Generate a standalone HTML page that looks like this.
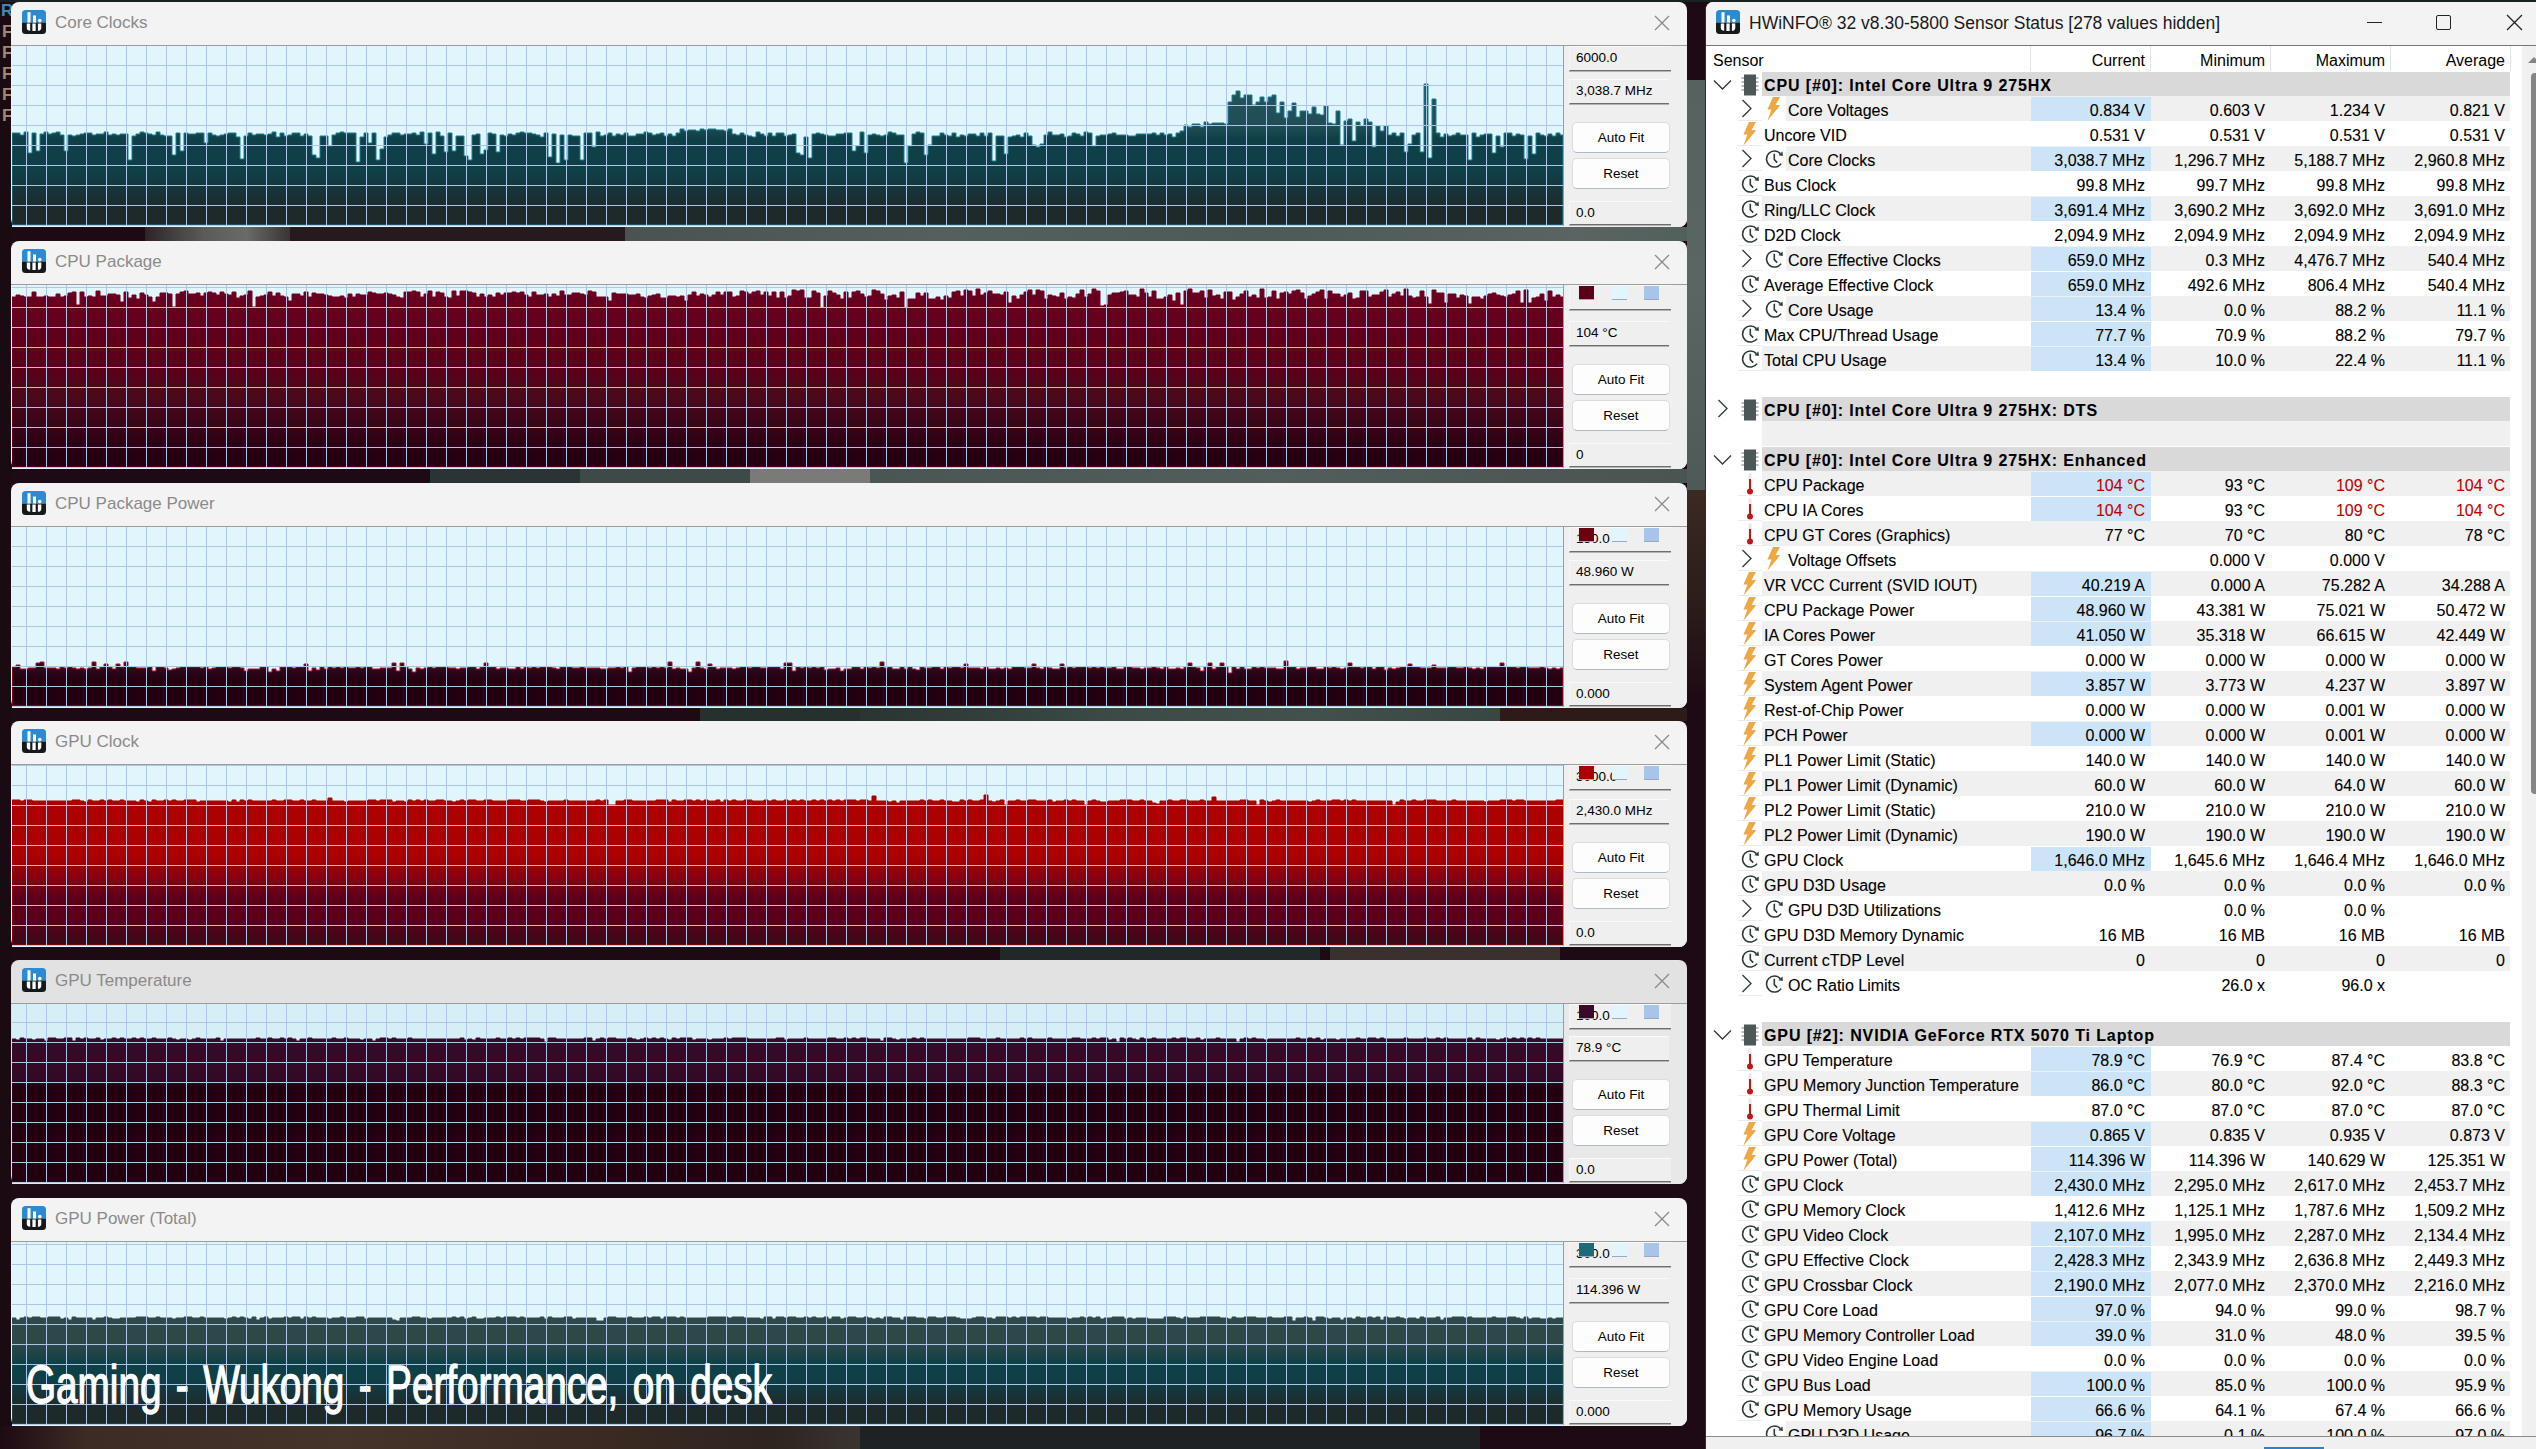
<!DOCTYPE html>
<html><head><meta charset="utf-8"><style>
*{margin:0;padding:0;box-sizing:border-box}
html,body{width:2536px;height:1449px;overflow:hidden}
body{position:relative;background:#1e0a14;font-family:"Liberation Sans", sans-serif;}
.wp{position:absolute}
.gw{position:absolute;left:11px;width:1676px;background:#f3f3f3;border-radius:8px;overflow:hidden}
.gt{position:absolute;left:44px;top:10px;font-size:17px;line-height:22px;color:#8a8a8a;white-space:nowrap}
.gx{position:absolute;left:1642px;top:12px}
.gline{position:absolute;left:0;right:0;height:1px;background:#9c9c9c}
.gpanel{position:absolute;left:1553px;right:0;background:#efefef}
.gs{position:absolute}
.vb{position:absolute;left:1569px;width:102px;background:#efefef;border-top:1px solid #fafafa;border-left:1px solid #f6f6f6;border-bottom:1px solid #6e6e6e;box-shadow:0 1px 0 #b4b4b4;font-size:13.5px;line-height:22px;padding-left:6px;color:#000;white-space:nowrap;overflow:hidden}
.vbt{position:absolute;left:6px;top:0}
.sw{position:absolute;top:-1px;width:15px;height:15px;border-bottom:1px solid #9aa8c0}
.btn{position:absolute;left:1572px;width:98px;height:31px;background:#fdfdfd;border:1px solid #dcdcdc;border-bottom-color:#b0b8c8;border-radius:5px;font-size:13.5px;line-height:29px;text-align:center;color:#000}
.hw{position:absolute;left:1705px;top:2px;width:831px;height:1447px;background:#fff;border-left:1px solid #2a3030;border-top-left-radius:8px;overflow:hidden}
.rg{position:absolute;left:1762px;width:748px;height:24px;background:#d9d9d9;margin-top:1px}
.rs{position:absolute;width:auto;right:26px;height:25px;background:#f0f0f0;margin-top:0}
.rb{position:absolute;left:2031px;width:120px;height:24px;background:#cce4f7;margin-top:1px}
.sep{position:absolute;left:1738px;width:24px;height:1px;background:#ececec}
.ic{position:absolute}
.tx{position:absolute;font-size:16px;line-height:26px;margin-top:2px;-webkit-text-stroke:0.1px #000;color:#000;white-space:nowrap}
.tx.b{font-weight:bold;letter-spacing:0.88px}
.tv{position:absolute;font-size:16px;line-height:26px;margin-top:2px;-webkit-text-stroke:0.1px currentColor;white-space:nowrap;text-align:right}
.hdr{position:absolute;top:48px;font-size:16px;line-height:26px;color:#000}
.cd{position:absolute;top:46px;width:1px;height:25px;background:#e5e5e5}
.ov{position:absolute;left:26px;top:1353px;font-size:53px;line-height:64px;color:#fff;-webkit-text-stroke:1.3px #fff;word-spacing:5px;white-space:nowrap;transform-origin:0 0;transform:scaleX(0.73)}
</style></head>
<body>

<div class="wp" style="left:0;top:0;width:11px;height:1449px;background:#1a0b12"></div><div class="wp" style="left:0;top:0;width:2536px;height:2px;background:#182222"></div><div class="wp" style="left:1px;top:0px;font:bold 17px/21px 'Liberation Sans',sans-serif;color:#3a8ab8">R</div><div class="wp" style="left:2px;top:21px;font:bold 17px/21px 'Liberation Sans',sans-serif;color:#a08870">F<br>F<br>F<br>F<br>F</div>
<div class="wp" style="left:145px;top:227px;width:145px;height:14px;background:linear-gradient(90deg,#2e2428,#5a5a58 40%,#6a6a68 70%,#3a3434)"></div>
<div class="wp" style="left:290px;top:227px;width:335px;height:14px;background:#261a1e"></div>
<div class="wp" style="left:625px;top:227px;width:1062px;height:14px;background:linear-gradient(90deg,#4a5252,#55605e 30%,#4e5a58 60%,#5a6462 90%,#52605c)"></div>
<div class="wp" style="left:430px;top:469px;width:150px;height:14px;background:#2a3434"></div>
<div class="wp" style="left:580px;top:469px;width:170px;height:14px;background:#3e4a48"></div>
<div class="wp" style="left:750px;top:469px;width:120px;height:14px;background:#7a7a78"></div>
<div class="wp" style="left:870px;top:469px;width:817px;height:14px;background:linear-gradient(90deg,#4a5654,#525e5c 50%,#4a5452)"></div>
<div class="wp" style="left:700px;top:708px;width:160px;height:13px;background:#26302e"></div>
<div class="wp" style="left:860px;top:708px;width:640px;height:13px;background:linear-gradient(90deg,#2a3432,#3e4a48 40%,#44504e 70%,#3a4644)"></div>
<div class="wp" style="left:1500px;top:708px;width:187px;height:13px;background:#2e1a16"></div>
<div class="wp" style="left:1000px;top:947px;width:320px;height:13px;background:#22282a"></div>
<div class="wp" style="left:1330px;top:947px;width:230px;height:13px;background:#3a3030"></div>
<div class="wp" style="left:1687px;top:80px;width:18px;height:410px;background:linear-gradient(#56625f,#5a6664 50%,#4e5a58)"></div>
<div class="wp" style="left:1687px;top:490px;width:18px;height:210px;background:linear-gradient(#3a2a22,#2a1a1a 60%,#1e0a14)"></div>
<div class="wp" style="left:0px;top:1426px;width:860px;height:23px;background:linear-gradient(90deg,#1e0a14,#3c2c24 10%,#44342a 40%,#3a2a22 70%,#2e2420 90%,#3a3430)"></div>
<div class="wp" style="left:860px;top:1426px;width:620px;height:23px;background:#1e2224"></div>

<div class="gw" style="top:2px;height:225px;">
<svg style="position:absolute;left:11px;top:8px" width="24" height="24" viewBox="0 0 24 24"><defs><clipPath id="rc"><rect x="0" y="0" width="24" height="24" rx="3.5"/></clipPath></defs><g clip-path="url(#rc)"><rect x="0" y="0" width="24" height="12.5" fill="#2b8ad2"/><rect x="0" y="12.5" width="24" height="11.5" fill="#141a1c"/><rect x="5.5" y="2.2" width="3" height="10.3" fill="#fff"/><rect x="11" y="5.5" width="3" height="7" fill="#fff"/><circle cx="17.8" cy="10.6" r="1.8" fill="#fff"/><path d="M4.8 13.6h3.4v7.2q-3.4 0-3.4-3z M10.4 13.6h3.3v7.4h-3.3z M15.9 13.6h3.4v3.8q0 3.4-3.4 3.4z" fill="#fff"/></g></svg>
<div class="gt">Core Clocks</div>
<svg class="gx" width="18" height="18" viewBox="0 0 18 18"><path d="M2 2L16 16M16 2L2 16" stroke="#8a8a8a" stroke-width="1.3" fill="none"/></svg>
<div class="gline" style="top:43px"></div>
<div class="gpanel" style="top:44px;height:181px;"></div>
</div>
<svg class="gs" style="left:12px;top:45px" width="1552" height="182" viewBox="12 45 1552 182"><defs><linearGradient id="g0" gradientUnits="userSpaceOnUse" x1="0" y1="45" x2="0" y2="225"><stop offset="0" stop-color="#2a5a60"/><stop offset="0.45" stop-color="#1f4e54"/><stop offset="0.52" stop-color="#0f4048"/><stop offset="0.7" stop-color="#0f4048"/><stop offset="0.9" stop-color="#1e2a2a"/><stop offset="1" stop-color="#1e2a2a"/></linearGradient></defs><rect x="12" y="45" width="1552" height="182" fill="#e0f6fc"/><path d="M12 225V133H16V133H20V135H24V132H28V153H32V133H36V151H40V134H44V132H48V134H52V133H56V132H60V135H64V151H68V135H72V136H76V135H80V134H84V133H88V133H92V135H96V134H100V134H104V132H108V135H112V134H116V135H120V134H124V134H128V160H132V136H136V134H140V132H144V133H148V134H152V135H156V132H160V135H164V136H168V136H172V155H176V133H180V151H184V133H188V134H192V134H196V133H200V133H204V143H208V133H212V135H216V136H220V135H224V134H228V133H232V133H236V137H240V159H244V136H248V133H252V135H256V134H260V134H264V135H268V134H272V132H276V137H280V133H284V136H288V135H292V133H296V133H300V136H304V134H308V136H312V155H316V158H320V136H324V136H328V146H332V135H336V133H340V132H344V133H348V133H352V133H356V162H360V137H364V133H368V143H372V133H376V160H380V149H384V137H388V135H392V133H396V133H400V135H404V134H408V134H412V133H416V135H420V132H424V144H428V133H432V154H436V132H440V136H444V152H448V133H452V151H456V136H460V136H464V156H468V160H472V135H476V134H480V154H484V150H488V133H492V134H496V152H500V135H504V136H508V134H512V135H516V133H520V132H524V133H528V133H532V134H536V135H540V137H544V133H548V157H552V134H556V163H560V135H564V160H568V135H572V136H576V136H580V160H584V133H588V133H592V147H596V132H600V136H604V135H608V133H612V136H616V134H620V135H624V133H628V136H632V136H636V134H640V134H644V132H648V133H652V135H656V134H660V133H664V136H668V134H672V136H676V133H680V129H684V131H688V130H692V130H696V131H700V129H704V130H708V129H712V129H716V130H720V130H724V131H728V129H732V134H736V135H740V133H744V135H748V136H752V137H756V132H760V134H764V136H768V133H772V136H776V133H780V133H784V136H788V135H792V134H796V153H800V155H804V137H808V158H812V134H816V133H820V134H824V135H828V136H832V136H836V134H840V134H844V133H848V133H852V151H856V146H860V132H864V153H868V135H872V134H876V135H880V136H884V135H888V132H892V133H896V135H900V135H904V163H908V146H912V134H916V132H920V133H924V155H928V145H932V136H936V136H940V133H944V135H948V136H952V133H956V137H960V135H964V136H968V134H972V134H976V136H980V133H984V136H988V133H992V161H996V136H1000V136H1004V154H1008V137H1012V136H1016V135H1020V137H1024V133H1028V136H1032V145H1036V147H1040V144H1044V135H1048V132H1052V135H1056V135H1060V134H1064V137H1068V136H1072V133H1076V134H1080V136H1084V132H1088V133H1092V146H1096V136H1100V135H1104V135H1108V134H1112V133H1116V135H1120V135H1124V135H1128V136H1132V136H1136V134H1140V134H1144V134H1148V134H1152V133H1156V135H1160V133H1164V135H1168V134H1172V137H1176V133H1180V131H1184V125H1188V127H1192V124H1196V124H1200V127H1204V122H1208V124H1212V123H1216V123H1220V123H1224V124H1228V102H1232V95H1236V91H1240V98H1244V95H1248V95H1252V105H1256V102H1260V97H1264V102H1268V97H1272V95H1276V113H1280V102H1284V118H1288V111H1292V103H1296V117H1300V111H1304V111H1308V114H1312V107H1316V114H1320V115H1324V106H1328V123H1332V124H1336V111H1340V145H1344V121H1348V119H1352V141H1356V122H1360V126H1364V119H1368V122H1372V147H1376V126H1380V131H1384V126H1388V135H1392V133H1396V136H1400V133H1404V152H1408V144H1412V135H1416V133H1420V152H1424V84H1428V158H1432V99H1436V133H1440V137H1444V134H1448V136H1452V135H1456V133H1460V135H1464V135H1468V160H1472V133H1476V137H1480V135H1484V134H1488V134H1492V153H1496V136H1500V147H1504V133H1508V133H1512V136H1516V134H1520V135H1524V159H1528V136H1532V154H1536V133H1540V135H1544V136H1548V134H1552V136H1556V133H1560V135H1563V225Z" fill="url(#g0)" stroke="#1a7f95" stroke-width="1"/><path d="M26.5 45V225M46.5 45V225M66.5 45V225M86.5 45V225M106.5 45V225M126.5 45V225M146.5 45V225M166.5 45V225M186.5 45V225M206.5 45V225M226.5 45V225M246.5 45V225M266.5 45V225M286.5 45V225M306.5 45V225M326.5 45V225M346.5 45V225M366.5 45V225M386.5 45V225M406.5 45V225M426.5 45V225M446.5 45V225M466.5 45V225M486.5 45V225M506.5 45V225M526.5 45V225M546.5 45V225M566.5 45V225M586.5 45V225M606.5 45V225M626.5 45V225M646.5 45V225M666.5 45V225M686.5 45V225M706.5 45V225M726.5 45V225M746.5 45V225M766.5 45V225M786.5 45V225M806.5 45V225M826.5 45V225M846.5 45V225M866.5 45V225M886.5 45V225M906.5 45V225M926.5 45V225M946.5 45V225M966.5 45V225M986.5 45V225M1006.5 45V225M1026.5 45V225M1046.5 45V225M1066.5 45V225M1086.5 45V225M1106.5 45V225M1126.5 45V225M1146.5 45V225M1166.5 45V225M1186.5 45V225M1206.5 45V225M1226.5 45V225M1246.5 45V225M1266.5 45V225M1286.5 45V225M1306.5 45V225M1326.5 45V225M1346.5 45V225M1366.5 45V225M1386.5 45V225M1406.5 45V225M1426.5 45V225M1446.5 45V225M1466.5 45V225M1486.5 45V225M1506.5 45V225M1526.5 45V225M1546.5 45V225M12 205.5H1563M12 185.5H1563M12 165.5H1563M12 145.5H1563M12 125.5H1563M12 105.5H1563M12 85.5H1563M12 65.5H1563" stroke="#adc6e8" stroke-width="1" fill="none"/><path d="M12 45.5H1564" stroke="#9c9c9c" stroke-width="1"/><path d="M12 225.5H1564" stroke="#b4c8e8" stroke-width="1"/><path d="M1563.5 45V226" stroke="#9c9c9c" stroke-width="1"/></svg>
<div class="vb" style="top:46px;height:25px">6000.0</div>
<div class="vb" style="top:79px;height:25px;width:100px">3,038.7 MHz</div>
<div class="btn" style="top:122px">Auto Fit</div>
<div class="btn" style="top:158px">Reset</div>
<div class="vb" style="top:201px;height:24px">0.0</div>
<div class="gw" style="top:241px;height:228px;">
<svg style="position:absolute;left:11px;top:8px" width="24" height="24" viewBox="0 0 24 24"><defs><clipPath id="rc"><rect x="0" y="0" width="24" height="24" rx="3.5"/></clipPath></defs><g clip-path="url(#rc)"><rect x="0" y="0" width="24" height="12.5" fill="#2b8ad2"/><rect x="0" y="12.5" width="24" height="11.5" fill="#141a1c"/><rect x="5.5" y="2.2" width="3" height="10.3" fill="#fff"/><rect x="11" y="5.5" width="3" height="7" fill="#fff"/><circle cx="17.8" cy="10.6" r="1.8" fill="#fff"/><path d="M4.8 13.6h3.4v7.2q-3.4 0-3.4-3z M10.4 13.6h3.3v7.4h-3.3z M15.9 13.6h3.4v3.8q0 3.4-3.4 3.4z" fill="#fff"/></g></svg>
<div class="gt">CPU Package</div>
<svg class="gx" width="18" height="18" viewBox="0 0 18 18"><path d="M2 2L16 16M16 2L2 16" stroke="#8a8a8a" stroke-width="1.3" fill="none"/></svg>
<div class="gline" style="top:43px"></div>
<div class="gpanel" style="top:44px;height:184px;"></div>
</div>
<svg class="gs" style="left:12px;top:284px" width="1552" height="185" viewBox="12 284 1552 185"><defs><linearGradient id="g1" gradientUnits="userSpaceOnUse" x1="0" y1="284" x2="0" y2="467"><stop offset="0" stop-color="#6a0020"/><stop offset="0.45" stop-color="#5c0019"/><stop offset="0.62" stop-color="#4a0a1c"/><stop offset="0.9" stop-color="#2a0012"/><stop offset="1" stop-color="#230010"/></linearGradient></defs><rect x="12" y="284" width="1552" height="185" fill="#e0f6fc"/><path d="M12 467V297H16V295H20V296H24V297H28V297H32V292H36V297H40V297H44V296H48V297H52V297H56V294H60V297H64V296H68V293H72V292H76V305H80V292H84V297H88V296H92V297H96V291H100V296H104V296H108V294H112V294H116V295H120V302H124V292H128V298H132V295H136V299H140V293H144V295H148V297H152V302H156V297H160V293H164V293H168V294H172V307H176V294H180V292H184V291H188V294H192V294H196V293H200V296H204V293H208V292H212V293H216V295H220V292H224V294H228V295H232V292H236V298H240V296H244V295H248V291H252V307H256V297H260V296H264V295H268V292H272V296H276V293H280V296H284V297H288V301H292V294H296V294H300V296H304V292H308V297H312V293H316V294H320V294H324V295H328V296H332V297H336V297H340V296H344V298H348V294H352V297H356V294H360V295H364V295H368V292H372V293H376V294H380V294H384V293H388V294H392V295H396V297H400V298H404V292H408V292H412V291H416V292H420V297H424V294H428V291H432V297H436V292H440V293H444V297H448V298H452V291H456V296H460V291H464V291H468V292H472V293H476V297H480V294H484V297H488V295H492V297H496V293H500V295H504V293H508V293H512V292H516V293H520V292H524V295H528V297H532V292H536V295H540V295H544V294H548V297H552V294H556V296H560V291H564V295H568V295H572V293H576V293H580V294H584V295H588V291H592V292H596V297H600V297H604V297H608V301H612V293H616V294H620V294H624V294H628V295H632V295H636V294H640V297H644V298H648V296H652V295H656V294H660V298H664V298H668V296H672V296H676V297H680V296H684V301H688V295H692V292H696V296H700V294H704V295H708V297H712V295H716V292H720V295H724V292H728V292H732V297H736V296H740V291H744V292H748V294H752V292H756V291H760V295H764V292H768V296H772V292H776V298H780V292H784V298H788V296H792V290H796V291H800V290H804V298H808V298H812V291H816V293H820V308H824V296H828V291H832V293H836V295H840V299H844V292H848V298H852V292H856V291H860V294H864V297H868V296H872V290H876V291H880V294H884V300H888V296H892V295H896V298H900V292H904V308H908V299H912V299H916V293H920V296H924V293H928V299H932V299H936V297H940V300H944V296H948V298H952V292H956V291H960V296H964V290H968V291H972V296H976V289H980V295H984V293H988V291H992V294H996V294H1000V295H1004V292H1008V303H1012V296H1016V299H1020V295H1024V292H1028V290H1032V295H1036V290H1040V291H1044V299H1048V295H1052V296H1056V297H1060V293H1064V299H1068V297H1072V298H1076V294H1080V290H1084V297H1088V294H1092V289H1096V291H1100V306H1104V305H1108V295H1112V293H1116V293H1120V292H1124V291H1128V295H1132V295H1136V297H1140V289H1144V293H1148V297H1152V291H1156V299H1160V299H1164V297H1168V295H1172V301H1176V293H1180V305H1184V291H1188V289H1192V293H1196V293H1200V291H1204V298H1208V290H1212V296H1216V295H1220V299H1224V292H1228V292H1232V300H1236V297H1240V294H1244V291H1248V297H1252V295H1256V298H1260V289H1264V298H1268V297H1272V291H1276V299H1280V293H1284V292H1288V294H1292V291H1296V290H1300V293H1304V299H1308V296H1312V294H1316V292H1320V290H1324V299H1328V291H1332V294H1336V294H1340V297H1344V295H1348V293H1352V299H1356V298H1360V291H1364V291H1368V297H1372V295H1376V295H1380V292H1384V290H1388V297H1392V294H1396V292H1400V296H1404V289H1408V296H1412V298H1416V297H1420V291H1424V297H1428V304H1432V290H1436V293H1440V293H1444V303H1448V294H1452V294H1456V298H1460V295H1464V296H1468V304H1472V297H1476V297H1480V299H1484V296H1488V294H1492V293H1496V295H1500V296H1504V297H1508V295H1512V294H1516V291H1520V303H1524V290H1528V303H1532V298H1536V297H1540V294H1544V301H1548V291H1552V297H1556V295H1560V297H1563V467Z" fill="url(#g1)" stroke="#7a0020" stroke-width="1"/><path d="M26.5 284V467M46.5 284V467M66.5 284V467M86.5 284V467M106.5 284V467M126.5 284V467M146.5 284V467M166.5 284V467M186.5 284V467M206.5 284V467M226.5 284V467M246.5 284V467M266.5 284V467M286.5 284V467M306.5 284V467M326.5 284V467M346.5 284V467M366.5 284V467M386.5 284V467M406.5 284V467M426.5 284V467M446.5 284V467M466.5 284V467M486.5 284V467M506.5 284V467M526.5 284V467M546.5 284V467M566.5 284V467M586.5 284V467M606.5 284V467M626.5 284V467M646.5 284V467M666.5 284V467M686.5 284V467M706.5 284V467M726.5 284V467M746.5 284V467M766.5 284V467M786.5 284V467M806.5 284V467M826.5 284V467M846.5 284V467M866.5 284V467M886.5 284V467M906.5 284V467M926.5 284V467M946.5 284V467M966.5 284V467M986.5 284V467M1006.5 284V467M1026.5 284V467M1046.5 284V467M1066.5 284V467M1086.5 284V467M1106.5 284V467M1126.5 284V467M1146.5 284V467M1166.5 284V467M1186.5 284V467M1206.5 284V467M1226.5 284V467M1246.5 284V467M1266.5 284V467M1286.5 284V467M1306.5 284V467M1326.5 284V467M1346.5 284V467M1366.5 284V467M1386.5 284V467M1406.5 284V467M1426.5 284V467M1446.5 284V467M1466.5 284V467M1486.5 284V467M1506.5 284V467M1526.5 284V467M1546.5 284V467M12 447.5H1563M12 427.5H1563M12 407.5H1563M12 387.5H1563M12 367.5H1563M12 347.5H1563M12 327.5H1563M12 307.5H1563M12 287.5H1563" stroke="#adc6e8" stroke-width="1" fill="none"/><path d="M12 284.5H1564" stroke="#9c9c9c" stroke-width="1"/><path d="M12 467.5H1564" stroke="#b4c8e8" stroke-width="1"/><path d="M1563.5 284V468" stroke="#9c9c9c" stroke-width="1"/></svg>
<div class="vb" style="top:285px;height:25px"><span class="vbt"></span><i class="sw" style="left:9px;background:#5c0019"></i><i class="sw" style="left:42px;background:#e0f6fc"></i><i class="sw" style="left:74px;background:#a8c4e8"></i></div>
<div class="vb" style="top:321px;height:25px;width:100px">104 °C</div>
<div class="btn" style="top:364px">Auto Fit</div>
<div class="btn" style="top:400px">Reset</div>
<div class="vb" style="top:443px;height:24px">0</div>
<div class="gw" style="top:483px;height:225px;">
<svg style="position:absolute;left:11px;top:8px" width="24" height="24" viewBox="0 0 24 24"><defs><clipPath id="rc"><rect x="0" y="0" width="24" height="24" rx="3.5"/></clipPath></defs><g clip-path="url(#rc)"><rect x="0" y="0" width="24" height="12.5" fill="#2b8ad2"/><rect x="0" y="12.5" width="24" height="11.5" fill="#141a1c"/><rect x="5.5" y="2.2" width="3" height="10.3" fill="#fff"/><rect x="11" y="5.5" width="3" height="7" fill="#fff"/><circle cx="17.8" cy="10.6" r="1.8" fill="#fff"/><path d="M4.8 13.6h3.4v7.2q-3.4 0-3.4-3z M10.4 13.6h3.3v7.4h-3.3z M15.9 13.6h3.4v3.8q0 3.4-3.4 3.4z" fill="#fff"/></g></svg>
<div class="gt">CPU Package Power</div>
<svg class="gx" width="18" height="18" viewBox="0 0 18 18"><path d="M2 2L16 16M16 2L2 16" stroke="#8a8a8a" stroke-width="1.3" fill="none"/></svg>
<div class="gline" style="top:43px"></div>
<div class="gpanel" style="top:44px;height:181px;"></div>
</div>
<svg class="gs" style="left:12px;top:526px" width="1552" height="182" viewBox="12 526 1552 182"><defs><linearGradient id="g2" gradientUnits="userSpaceOnUse" x1="0" y1="526" x2="0" y2="706"><stop offset="0" stop-color="#5a0a20"/><stop offset="0.78" stop-color="#300a1a"/><stop offset="0.86" stop-color="#230010"/><stop offset="1" stop-color="#220010"/></linearGradient></defs><rect x="12" y="526" width="1552" height="182" fill="#e0f6fc"/><path d="M12 706V667H16V665H20V669H24V669H28V668H32V668H36V663H40V662H44V668H48V668H52V668H56V669H60V667H64V668H68V667H72V668H76V669H80V668H84V669H88V668H92V662H96V669H100V667H104V664H108V667H112V669H116V664H120V667H124V662H128V667H132V667H136V668H140V668H144V668H148V667H152V671H156V667H160V667H164V668H168V670H172V669H176V668H180V667H184V667H188V667H192V667H196V667H200V668H204V667H208V669H212V668H216V667H220V667H224V667H228V668H232V667H236V667H240V668H244V671H248V669H252V669H256V669H260V667H264V667H268V672H272V669H276V671H280V667H284V667H288V667H292V668H296V667H300V667H304V664H308V671H312V668H316V670H320V667H324V669H328V667H332V668H336V667H340V668H344V667H348V668H352V668H356V667H360V668H364V667H368V667H372V669H376V669H380V668H384V668H388V668H392V663H396V671H400V663H404V667H408V669H412V672H416V668H420V669H424V668H428V667H432V668H436V667H440V667H444V667H448V668H452V668H456V669H460V668H464V668H468V667H472V667H476V669H480V667H484V663H488V667H492V667H496V669H500V668H504V668H508V669H512V669H516V667H520V669H524V667H528V668H532V667H536V668H540V667H544V667H548V667H552V668H556V669H560V667H564V667H568V667H572V668H576V668H580V667H584V668H588V668H592V668H596V668H600V669H604V669H608V668H612V668H616V667H620V668H624V667H628V672H632V668H636V667H640V667H644V667H648V668H652V667H656V668H660V667H664V668H668V662H672V669H676V668H680V669H684V669H688V672H692V668H696V662H700V668H704V669H708V664H712V667H716V669H720V668H724V668H728V668H732V669H736V668H740V667H744V667H748V668H752V667H756V667H760V668H764V668H768V667H772V667H776V667H780V669H784V663H788V663H792V671H796V667H800V668H804V667H808V668H812V667H816V668H820V667H824V670H828V669H832V669H836V668H840V671H844V669H848V669H852V667H856V667H860V669H864V667H868V668H872V667H876V668H880V662H884V668H888V667H892V669H896V669H900V667H904V669H908V667H912V669H916V670H920V667H924V668H928V668H932V667H936V667H940V669H944V667H948V668H952V667H956V667H960V668H964V664H968V668H972V668H976V668H980V669H984V667H988V669H992V669H996V668H1000V669H1004V668H1008V669H1012V667H1016V667H1020V667H1024V668H1028V668H1032V664H1036V668H1040V669H1044V667H1048V668H1052V669H1056V669H1060V664H1064V668H1068V667H1072V668H1076V667H1080V667H1084V667H1088V668H1092V667H1096V668H1100V667H1104V668H1108V668H1112V667H1116V669H1120V669H1124V667H1128V667H1132V668H1136V668H1140V669H1144V668H1148V668H1152V667H1156V668H1160V669H1164V667H1168V669H1172V669H1176V668H1180V669H1184V667H1188V663H1192V667H1196V668H1200V671H1204V667H1208V663H1212V669H1216V667H1220V663H1224V667H1228V673H1232V667H1236V669H1240V667H1244V669H1248V669H1252V667H1256V668H1260V667H1264V668H1268V668H1272V668H1276V669H1280V669H1284V661H1288V667H1292V667H1296V669H1300V668H1304V668H1308V667H1312V667H1316V669H1320V669H1324V667H1328V668H1332V667H1336V668H1340V669H1344V668H1348V663H1352V667H1356V667H1360V668H1364V667H1368V667H1372V669H1376V667H1380V667H1384V670H1388V668H1392V669H1396V668H1400V667H1404V667H1408V664H1412V667H1416V667H1420V668H1424V668H1428V668H1432V665H1436V668H1440V668H1444V668H1448V667H1452V667H1456V668H1460V668H1464V667H1468V668H1472V669H1476V668H1480V669H1484V667H1488V667H1492V667H1496V667H1500V663H1504V667H1508V667H1512V667H1516V668H1520V667H1524V667H1528V668H1532V668H1536V668H1540V667H1544V668H1548V669H1552V668H1556V669H1560V668H1563V706Z" fill="url(#g2)" stroke="#b01030" stroke-width="1"/><path d="M26.5 526V706M46.5 526V706M66.5 526V706M86.5 526V706M106.5 526V706M126.5 526V706M146.5 526V706M166.5 526V706M186.5 526V706M206.5 526V706M226.5 526V706M246.5 526V706M266.5 526V706M286.5 526V706M306.5 526V706M326.5 526V706M346.5 526V706M366.5 526V706M386.5 526V706M406.5 526V706M426.5 526V706M446.5 526V706M466.5 526V706M486.5 526V706M506.5 526V706M526.5 526V706M546.5 526V706M566.5 526V706M586.5 526V706M606.5 526V706M626.5 526V706M646.5 526V706M666.5 526V706M686.5 526V706M706.5 526V706M726.5 526V706M746.5 526V706M766.5 526V706M786.5 526V706M806.5 526V706M826.5 526V706M846.5 526V706M866.5 526V706M886.5 526V706M906.5 526V706M926.5 526V706M946.5 526V706M966.5 526V706M986.5 526V706M1006.5 526V706M1026.5 526V706M1046.5 526V706M1066.5 526V706M1086.5 526V706M1106.5 526V706M1126.5 526V706M1146.5 526V706M1166.5 526V706M1186.5 526V706M1206.5 526V706M1226.5 526V706M1246.5 526V706M1266.5 526V706M1286.5 526V706M1306.5 526V706M1326.5 526V706M1346.5 526V706M1366.5 526V706M1386.5 526V706M1406.5 526V706M1426.5 526V706M1446.5 526V706M1466.5 526V706M1486.5 526V706M1506.5 526V706M1526.5 526V706M1546.5 526V706M12 686.5H1563M12 666.5H1563M12 646.5H1563M12 626.5H1563M12 606.5H1563M12 586.5H1563M12 566.5H1563M12 546.5H1563" stroke="#adc6e8" stroke-width="1" fill="none"/><path d="M12 526.5H1564" stroke="#9c9c9c" stroke-width="1"/><path d="M12 706.5H1564" stroke="#b4c8e8" stroke-width="1"/><path d="M1563.5 526V707" stroke="#9c9c9c" stroke-width="1"/></svg>
<div class="vb" style="top:527px;height:25px"><span class="vbt">150.0</span><i class="sw" style="left:9px;background:#6a0010"></i><i class="sw" style="left:42px;background:#e0f6fc"></i><i class="sw" style="left:74px;background:#a8c4e8"></i></div>
<div class="vb" style="top:560px;height:25px;width:100px">48.960 W</div>
<div class="btn" style="top:603px">Auto Fit</div>
<div class="btn" style="top:639px">Reset</div>
<div class="vb" style="top:682px;height:24px">0.000</div>
<div class="gw" style="top:721px;height:226px;">
<svg style="position:absolute;left:11px;top:8px" width="24" height="24" viewBox="0 0 24 24"><defs><clipPath id="rc"><rect x="0" y="0" width="24" height="24" rx="3.5"/></clipPath></defs><g clip-path="url(#rc)"><rect x="0" y="0" width="24" height="12.5" fill="#2b8ad2"/><rect x="0" y="12.5" width="24" height="11.5" fill="#141a1c"/><rect x="5.5" y="2.2" width="3" height="10.3" fill="#fff"/><rect x="11" y="5.5" width="3" height="7" fill="#fff"/><circle cx="17.8" cy="10.6" r="1.8" fill="#fff"/><path d="M4.8 13.6h3.4v7.2q-3.4 0-3.4-3z M10.4 13.6h3.3v7.4h-3.3z M15.9 13.6h3.4v3.8q0 3.4-3.4 3.4z" fill="#fff"/></g></svg>
<div class="gt">GPU Clock</div>
<svg class="gx" width="18" height="18" viewBox="0 0 18 18"><path d="M2 2L16 16M16 2L2 16" stroke="#8a8a8a" stroke-width="1.3" fill="none"/></svg>
<div class="gline" style="top:43px"></div>
<div class="gpanel" style="top:44px;height:182px;"></div>
</div>
<svg class="gs" style="left:12px;top:764px" width="1552" height="183" viewBox="12 764 1552 183"><defs><linearGradient id="g3" gradientUnits="userSpaceOnUse" x1="0" y1="764" x2="0" y2="945"><stop offset="0" stop-color="#ad0000"/><stop offset="0.5" stop-color="#ad0000"/><stop offset="0.62" stop-color="#8c0010"/><stop offset="0.74" stop-color="#5c0019"/><stop offset="0.86" stop-color="#5c0019"/><stop offset="1" stop-color="#3a0a18"/></linearGradient></defs><rect x="12" y="764" width="1552" height="183" fill="#e0f6fc"/><path d="M12 945V800H16V800H20V801H24V800H28V800H32V801H36V801H40V801H44V801H48V801H52V801H56V801H60V801H64V801H68V801H72V800H76V800H80V801H84V802H88V800H92V801H96V801H100V800H104V801H108V800H112V801H116V801H120V800H124V801H128V801H132V801H136V802H140V800H144V801H148V802H152V800H156V801H160V801H164V800H168V801H172V800H176V801H180V801H184V800H188V800H192V800H196V802H200V801H204V801H208V801H212V801H216V801H220V801H224V801H228V802H232V800H236V802H240V800H244V801H248V800H252V801H256V801H260V801H264V801H268V801H272V800H276V801H280V801H284V800H288V800H292V801H296V801H300V800H304V801H308V801H312V800H316V801H320V801H324V801H328V798H332V801H336V801H340V801H344V802H348V801H352V801H356V801H360V801H364V801H368V800H372V800H376V801H380V800H384V800H388V800H392V802H396V801H400V801H404V802H408V800H412V801H416V800H420V801H424V800H428V801H432V801H436V800H440V800H444V801H448V801H452V802H456V801H460V800H464V801H468V800H472V800H476V801H480V801H484V800H488V800H492V801H496V801H500V801H504V801H508V800H512V800H516V800H520V801H524V801H528V800H532V800H536V800H540V801H544V802H548V801H552V801H556V801H560V801H564V800H568V801H572V801H576V801H580V801H584V801H588V801H592V801H596V800H600V801H604V800H608V805H612V805H616V801H620V801H624V800H628V800H632V801H636V801H640V801H644V801H648V801H652V801H656V800H660V800H664V800H668V802H672V800H676V801H680V801H684V800H688V800H692V801H696V800H700V801H704V800H708V801H712V801H716V800H720V802H724V800H728V801H732V800H736V801H740V801H744V800H748V800H752V801H756V801H760V801H764V800H768V801H772V800H776V801H780V801H784V800H788V801H792V800H796V801H800V800H804V801H808V801H812V800H816V801H820V800H824V801H828V800H832V801H836V800H840V801H844V800H848V800H852V800H856V801H860V800H864V800H868V801H872V796H876V801H880V801H884V801H888V802H892V801H896V803H900V801H904V801H908V801H912V801H916V801H920V800H924V801H928V800H932V801H936V801H940V800H944V801H948V801H952V802H956V802H960V800H964V801H968V800H972V801H976V801H980V800H984V795H988V801H992V802H996V801H1000V800H1004V805H1008V801H1012V801H1016V800H1020V801H1024V801H1028V800H1032V800H1036V801H1040V801H1044V801H1048V800H1052V802H1056V801H1060V801H1064V800H1068V801H1072V800H1076V801H1080V801H1084V805H1088V801H1092V800H1096V801H1100V802H1104V802H1108V801H1112V801H1116V801H1120V800H1124V800H1128V800H1132V801H1136V801H1140V800H1144V801H1148V801H1152V803H1156V804H1160V801H1164V801H1168V800H1172V801H1176V801H1180V800H1184V800H1188V801H1192V801H1196V801H1200V800H1204V801H1208V801H1212V797H1216V801H1220V801H1224V801H1228V801H1232V801H1236V801H1240V800H1244V800H1248V801H1252V801H1256V805H1260V800H1264V801H1268V802H1272V801H1276V800H1280V801H1284V801H1288V801H1292V801H1296V801H1300V801H1304V801H1308V802H1312V801H1316V800H1320V801H1324V801H1328V801H1332V800H1336V800H1340V801H1344V800H1348V801H1352V800H1356V801H1360V801H1364V801H1368V801H1372V801H1376V801H1380V801H1384V801H1388V801H1392V805H1396V802H1400V800H1404V801H1408V801H1412V800H1416V801H1420V801H1424V800H1428V800H1432V800H1436V801H1440V801H1444V801H1448V801H1452V800H1456V801H1460V801H1464V801H1468V801H1472V801H1476V801H1480V801H1484V802H1488V801H1492V801H1496V801H1500V800H1504V800H1508V800H1512V801H1516V800H1520V800H1524V801H1528V801H1532V801H1536V801H1540V801H1544V801H1548V801H1552V801H1556V800H1560V800H1563V945Z" fill="url(#g3)" stroke="#ad0000" stroke-width="1"/><path d="M26.5 764V945M46.5 764V945M66.5 764V945M86.5 764V945M106.5 764V945M126.5 764V945M146.5 764V945M166.5 764V945M186.5 764V945M206.5 764V945M226.5 764V945M246.5 764V945M266.5 764V945M286.5 764V945M306.5 764V945M326.5 764V945M346.5 764V945M366.5 764V945M386.5 764V945M406.5 764V945M426.5 764V945M446.5 764V945M466.5 764V945M486.5 764V945M506.5 764V945M526.5 764V945M546.5 764V945M566.5 764V945M586.5 764V945M606.5 764V945M626.5 764V945M646.5 764V945M666.5 764V945M686.5 764V945M706.5 764V945M726.5 764V945M746.5 764V945M766.5 764V945M786.5 764V945M806.5 764V945M826.5 764V945M846.5 764V945M866.5 764V945M886.5 764V945M906.5 764V945M926.5 764V945M946.5 764V945M966.5 764V945M986.5 764V945M1006.5 764V945M1026.5 764V945M1046.5 764V945M1066.5 764V945M1086.5 764V945M1106.5 764V945M1126.5 764V945M1146.5 764V945M1166.5 764V945M1186.5 764V945M1206.5 764V945M1226.5 764V945M1246.5 764V945M1266.5 764V945M1286.5 764V945M1306.5 764V945M1326.5 764V945M1346.5 764V945M1366.5 764V945M1386.5 764V945M1406.5 764V945M1426.5 764V945M1446.5 764V945M1466.5 764V945M1486.5 764V945M1506.5 764V945M1526.5 764V945M1546.5 764V945M12 925.5H1563M12 905.5H1563M12 885.5H1563M12 865.5H1563M12 845.5H1563M12 825.5H1563M12 805.5H1563M12 785.5H1563M12 765.5H1563" stroke="#adc6e8" stroke-width="1" fill="none"/><path d="M12 764.5H1564" stroke="#9c9c9c" stroke-width="1"/><path d="M12 945.5H1564" stroke="#b4c8e8" stroke-width="1"/><path d="M1563.5 764V946" stroke="#9c9c9c" stroke-width="1"/></svg>
<div class="vb" style="top:765px;height:25px"><span class="vbt">3000.0</span><i class="sw" style="left:9px;background:#ad0000"></i><i class="sw" style="left:42px;background:#e0f6fc"></i><i class="sw" style="left:74px;background:#a8c4e8"></i></div>
<div class="vb" style="top:799px;height:25px;width:100px">2,430.0 MHz</div>
<div class="btn" style="top:842px">Auto Fit</div>
<div class="btn" style="top:878px">Reset</div>
<div class="vb" style="top:921px;height:24px">0.0</div>
<div class="gw" style="top:960px;height:224px;background:#e2e2e2;">
<svg style="position:absolute;left:11px;top:8px" width="24" height="24" viewBox="0 0 24 24"><defs><clipPath id="rc"><rect x="0" y="0" width="24" height="24" rx="3.5"/></clipPath></defs><g clip-path="url(#rc)"><rect x="0" y="0" width="24" height="12.5" fill="#2b8ad2"/><rect x="0" y="12.5" width="24" height="11.5" fill="#141a1c"/><rect x="5.5" y="2.2" width="3" height="10.3" fill="#fff"/><rect x="11" y="5.5" width="3" height="7" fill="#fff"/><circle cx="17.8" cy="10.6" r="1.8" fill="#fff"/><path d="M4.8 13.6h3.4v7.2q-3.4 0-3.4-3z M10.4 13.6h3.3v7.4h-3.3z M15.9 13.6h3.4v3.8q0 3.4-3.4 3.4z" fill="#fff"/></g></svg>
<div class="gt">GPU Temperature</div>
<svg class="gx" width="18" height="18" viewBox="0 0 18 18"><path d="M2 2L16 16M16 2L2 16" stroke="#8a8a8a" stroke-width="1.3" fill="none"/></svg>
<div class="gline" style="top:43px"></div>
<div class="gpanel" style="top:44px;height:180px;background:#e8e8e8;"></div>
</div>
<svg class="gs" style="left:12px;top:1003px" width="1552" height="181" viewBox="12 1003 1552 181"><defs><linearGradient id="g4" gradientUnits="userSpaceOnUse" x1="0" y1="1003" x2="0" y2="1182"><stop offset="0" stop-color="#3a0a2a"/><stop offset="0.43" stop-color="#330a26"/><stop offset="0.47" stop-color="#220010"/><stop offset="1" stop-color="#220010"/></linearGradient></defs><rect x="12" y="1003" width="1552" height="181" fill="#d6eef5"/><path d="M12 1182V1039H16V1040H20V1038H24V1039H28V1039H32V1040H36V1039H40V1039H44V1041H48V1038H52V1038H56V1039H60V1039H64V1038H68V1038H72V1041H76V1038H80V1039H84V1038H88V1039H92V1039H96V1038H100V1040H104V1039H108V1039H112V1038H116V1039H120V1038H124V1039H128V1039H132V1038H136V1039H140V1038H144V1039H148V1039H152V1038H156V1039H160V1039H164V1039H168V1038H172V1039H176V1040H180V1039H184V1039H188V1040H192V1039H196V1038H200V1039H204V1039H208V1039H212V1039H216V1038H220V1041H224V1039H228V1039H232V1039H236V1039H240V1039H244V1039H248V1039H252V1039H256V1038H260V1039H264V1039H268V1038H272V1039H276V1039H280V1038H284V1039H288V1038H292V1039H296V1041H300V1039H304V1039H308V1038H312V1039H316V1039H320V1039H324V1039H328V1039H332V1038H336V1039H340V1039H344V1038H348V1039H352V1039H356V1039H360V1040H364V1039H368V1039H372V1041H376V1039H380V1038H384V1038H388V1039H392V1038H396V1039H400V1039H404V1039H408V1038H412V1039H416V1039H420V1039H424V1039H428V1039H432V1039H436V1039H440V1039H444V1039H448V1039H452V1039H456V1039H460V1038H464V1040H468V1039H472V1040H476V1038H480V1039H484V1039H488V1039H492V1039H496V1038H500V1039H504V1039H508V1038H512V1039H516V1038H520V1039H524V1038H528V1038H532V1038H536V1038H540V1039H544V1042H548V1038H552V1038H556V1039H560V1039H564V1039H568V1039H572V1039H576V1039H580V1039H584V1038H588V1038H592V1041H596V1039H600V1038H604V1039H608V1038H612V1038H616V1039H620V1039H624V1039H628V1038H632V1039H636V1040H640V1039H644V1038H648V1039H652V1038H656V1039H660V1038H664V1039H668V1040H672V1038H676V1039H680V1038H684V1038H688V1038H692V1040H696V1039H700V1039H704V1039H708V1040H712V1039H716V1039H720V1039H724V1038H728V1039H732V1038H736V1038H740V1038H744V1038H748V1039H752V1039H756V1039H760V1039H764V1039H768V1039H772V1039H776V1038H780V1038H784V1040H788V1039H792V1039H796V1039H800V1039H804V1038H808V1039H812V1039H816V1039H820V1039H824V1039H828V1038H832V1038H836V1039H840V1039H844V1038H848V1039H852V1038H856V1039H860V1038H864V1038H868V1039H872V1039H876V1039H880V1041H884V1038H888V1038H892V1039H896V1040H900V1039H904V1039H908V1039H912V1038H916V1039H920V1038H924V1039H928V1039H932V1039H936V1039H940V1039H944V1039H948V1039H952V1039H956V1039H960V1039H964V1039H968V1038H972V1038H976V1038H980V1039H984V1039H988V1039H992V1039H996V1038H1000V1039H1004V1039H1008V1039H1012V1039H1016V1039H1020V1038H1024V1039H1028V1038H1032V1039H1036V1039H1040V1039H1044V1039H1048V1038H1052V1039H1056V1039H1060V1039H1064V1039H1068V1039H1072V1038H1076V1038H1080V1039H1084V1039H1088V1039H1092V1038H1096V1039H1100V1038H1104V1038H1108V1040H1112V1039H1116V1042H1120V1038H1124V1039H1128V1038H1132V1039H1136V1040H1140V1038H1144V1039H1148V1039H1152V1038H1156V1039H1160V1039H1164V1039H1168V1039H1172V1038H1176V1039H1180V1038H1184V1038H1188V1039H1192V1039H1196V1038H1200V1040H1204V1039H1208V1039H1212V1039H1216V1038H1220V1039H1224V1039H1228V1039H1232V1039H1236V1042H1240V1039H1244V1038H1248V1039H1252V1038H1256V1039H1260V1039H1264V1040H1268V1039H1272V1039H1276V1039H1280V1039H1284V1039H1288V1039H1292V1039H1296V1038H1300V1039H1304V1039H1308V1038H1312V1039H1316V1038H1320V1040H1324V1039H1328V1039H1332V1039H1336V1040H1340V1039H1344V1039H1348V1039H1352V1039H1356V1038H1360V1039H1364V1039H1368V1038H1372V1038H1376V1039H1380V1038H1384V1039H1388V1039H1392V1039H1396V1039H1400V1039H1404V1038H1408V1039H1412V1039H1416V1039H1420V1039H1424V1038H1428V1039H1432V1039H1436V1038H1440V1039H1444V1038H1448V1039H1452V1039H1456V1039H1460V1039H1464V1039H1468V1038H1472V1040H1476V1038H1480V1039H1484V1039H1488V1039H1492V1039H1496V1040H1500V1039H1504V1038H1508V1039H1512V1038H1516V1039H1520V1038H1524V1039H1528V1038H1532V1039H1536V1038H1540V1039H1544V1039H1548V1039H1552V1039H1556V1039H1560V1039H1563V1182Z" fill="url(#g4)" stroke="#3a0a2a" stroke-width="1"/><path d="M26.5 1003V1182M46.5 1003V1182M66.5 1003V1182M86.5 1003V1182M106.5 1003V1182M126.5 1003V1182M146.5 1003V1182M166.5 1003V1182M186.5 1003V1182M206.5 1003V1182M226.5 1003V1182M246.5 1003V1182M266.5 1003V1182M286.5 1003V1182M306.5 1003V1182M326.5 1003V1182M346.5 1003V1182M366.5 1003V1182M386.5 1003V1182M406.5 1003V1182M426.5 1003V1182M446.5 1003V1182M466.5 1003V1182M486.5 1003V1182M506.5 1003V1182M526.5 1003V1182M546.5 1003V1182M566.5 1003V1182M586.5 1003V1182M606.5 1003V1182M626.5 1003V1182M646.5 1003V1182M666.5 1003V1182M686.5 1003V1182M706.5 1003V1182M726.5 1003V1182M746.5 1003V1182M766.5 1003V1182M786.5 1003V1182M806.5 1003V1182M826.5 1003V1182M846.5 1003V1182M866.5 1003V1182M886.5 1003V1182M906.5 1003V1182M926.5 1003V1182M946.5 1003V1182M966.5 1003V1182M986.5 1003V1182M1006.5 1003V1182M1026.5 1003V1182M1046.5 1003V1182M1066.5 1003V1182M1086.5 1003V1182M1106.5 1003V1182M1126.5 1003V1182M1146.5 1003V1182M1166.5 1003V1182M1186.5 1003V1182M1206.5 1003V1182M1226.5 1003V1182M1246.5 1003V1182M1266.5 1003V1182M1286.5 1003V1182M1306.5 1003V1182M1326.5 1003V1182M1346.5 1003V1182M1366.5 1003V1182M1386.5 1003V1182M1406.5 1003V1182M1426.5 1003V1182M1446.5 1003V1182M1466.5 1003V1182M1486.5 1003V1182M1506.5 1003V1182M1526.5 1003V1182M1546.5 1003V1182M12 1162.5H1563M12 1142.5H1563M12 1122.5H1563M12 1102.5H1563M12 1082.5H1563M12 1062.5H1563M12 1042.5H1563M12 1022.5H1563" stroke="#adc6e8" stroke-width="1" fill="none"/><path d="M12 1003.5H1564" stroke="#9c9c9c" stroke-width="1"/><path d="M12 1182.5H1564" stroke="#b4c8e8" stroke-width="1"/><path d="M1563.5 1003V1183" stroke="#9c9c9c" stroke-width="1"/></svg>
<div class="vb" style="top:1004px;height:25px"><span class="vbt">100.0</span><i class="sw" style="left:9px;background:#3a0a28"></i><i class="sw" style="left:42px;background:#e0f6fc"></i><i class="sw" style="left:74px;background:#a8c4e8"></i></div>
<div class="vb" style="top:1036px;height:25px;width:100px">78.9 °C</div>
<div class="btn" style="top:1079px">Auto Fit</div>
<div class="btn" style="top:1115px">Reset</div>
<div class="vb" style="top:1158px;height:24px">0.0</div>
<div class="gw" style="top:1198px;height:228px;">
<svg style="position:absolute;left:11px;top:8px" width="24" height="24" viewBox="0 0 24 24"><defs><clipPath id="rc"><rect x="0" y="0" width="24" height="24" rx="3.5"/></clipPath></defs><g clip-path="url(#rc)"><rect x="0" y="0" width="24" height="12.5" fill="#2b8ad2"/><rect x="0" y="12.5" width="24" height="11.5" fill="#141a1c"/><rect x="5.5" y="2.2" width="3" height="10.3" fill="#fff"/><rect x="11" y="5.5" width="3" height="7" fill="#fff"/><circle cx="17.8" cy="10.6" r="1.8" fill="#fff"/><path d="M4.8 13.6h3.4v7.2q-3.4 0-3.4-3z M10.4 13.6h3.3v7.4h-3.3z M15.9 13.6h3.4v3.8q0 3.4-3.4 3.4z" fill="#fff"/></g></svg>
<div class="gt">GPU Power (Total)</div>
<svg class="gx" width="18" height="18" viewBox="0 0 18 18"><path d="M2 2L16 16M16 2L2 16" stroke="#8a8a8a" stroke-width="1.3" fill="none"/></svg>
<div class="gline" style="top:43px"></div>
<div class="gpanel" style="top:44px;height:184px;"></div>
</div>
<svg class="gs" style="left:12px;top:1241px" width="1552" height="185" viewBox="12 1241 1552 185"><defs><linearGradient id="g5" gradientUnits="userSpaceOnUse" x1="0" y1="1241" x2="0" y2="1424"><stop offset="0" stop-color="#304a4a"/><stop offset="0.56" stop-color="#2e4848"/><stop offset="0.67" stop-color="#0f3f47"/><stop offset="0.76" stop-color="#0f3f47"/><stop offset="0.9" stop-color="#1e2a2a"/><stop offset="1" stop-color="#1e2a2a"/></linearGradient></defs><rect x="12" y="1241" width="1552" height="185" fill="#e0f6fc"/><path d="M12 1424V1318H16V1320H20V1318H24V1317H28V1318H32V1317H36V1317H40V1318H44V1318H48V1317H52V1317H56V1317H60V1319H64V1318H68V1320H72V1317H76V1318H80V1318H84V1318H88V1318H92V1320H96V1318H100V1318H104V1317H108V1318H112V1319H116V1319H120V1318H124V1318H128V1318H132V1318H136V1317H140V1317H144V1317H148V1318H152V1318H156V1317H160V1318H164V1318H168V1318H172V1319H176V1318H180V1318H184V1317H188V1317H192V1318H196V1318H200V1317H204V1318H208V1318H212V1318H216V1318H220V1318H224V1319H228V1318H232V1317H236V1318H240V1317H244V1318H248V1319H252V1317H256V1320H260V1318H264V1317H268V1319H272V1318H276V1318H280V1318H284V1317H288V1318H292V1317H296V1317H300V1319H304V1317H308V1318H312V1317H316V1318H320V1318H324V1318H328V1319H332V1318H336V1318H340V1317H344V1318H348V1318H352V1318H356V1317H360V1317H364V1319H368V1318H372V1318H376V1318H380V1318H384V1318H388V1318H392V1320H396V1321H400V1318H404V1318H408V1318H412V1317H416V1317H420V1318H424V1318H428V1319H432V1318H436V1318H440V1318H444V1318H448V1318H452V1317H456V1318H460V1317H464V1319H468V1318H472V1317H476V1319H480V1319H484V1318H488V1318H492V1318H496V1317H500V1318H504V1317H508V1317H512V1317H516V1318H520V1317H524V1318H528V1318H532V1318H536V1318H540V1317H544V1319H548V1317H552V1318H556V1318H560V1318H564V1317H568V1317H572V1319H576V1318H580V1318H584V1318H588V1318H592V1318H596V1321H600V1321H604V1318H608V1317H612V1317H616V1318H620V1318H624V1318H628V1317H632V1318H636V1318H640V1318H644V1317H648V1318H652V1317H656V1317H660V1319H664V1317H668V1317H672V1317H676V1318H680V1317H684V1318H688V1318H692V1318H696V1318H700V1318H704V1318H708V1317H712V1317H716V1317H720V1317H724V1317H728V1318H732V1317H736V1317H740V1317H744V1318H748V1318H752V1318H756V1318H760V1319H764V1317H768V1317H772V1319H776V1317H780V1317H784V1318H788V1317H792V1317H796V1318H800V1318H804V1317H808V1318H812V1317H816V1318H820V1318H824V1317H828V1319H832V1317H836V1317H840V1319H844V1318H848V1317H852V1317H856V1318H860V1318H864V1317H868V1318H872V1319H876V1318H880V1319H884V1317H888V1317H892V1318H896V1318H900V1320H904V1317H908V1317H912V1317H916V1318H920V1318H924V1319H928V1317H932V1317H936V1318H940V1318H944V1317H948V1317H952V1317H956V1318H960V1319H964V1319H968V1319H972V1318H976V1317H980V1317H984V1318H988V1318H992V1319H996V1317H1000V1317H1004V1317H1008V1318H1012V1317H1016V1318H1020V1317H1024V1317H1028V1317H1032V1317H1036V1318H1040V1317H1044V1317H1048V1318H1052V1318H1056V1318H1060V1318H1064V1318H1068V1319H1072V1318H1076V1318H1080V1317H1084V1318H1088V1317H1092V1318H1096V1317H1100V1319H1104V1318H1108V1318H1112V1317H1116V1317H1120V1317H1124V1319H1128V1318H1132V1319H1136V1318H1140V1318H1144V1318H1148V1319H1152V1319H1156V1319H1160V1319H1164V1317H1168V1317H1172V1317H1176V1318H1180V1319H1184V1317H1188V1318H1192V1318H1196V1318H1200V1317H1204V1317H1208V1317H1212V1317H1216V1317H1220V1318H1224V1318H1228V1319H1232V1317H1236V1318H1240V1318H1244V1317H1248V1317H1252V1317H1256V1318H1260V1318H1264V1318H1268V1317H1272V1318H1276V1318H1280V1318H1284V1317H1288V1317H1292V1321H1296V1318H1300V1318H1304V1317H1308V1318H1312V1321H1316V1317H1320V1317H1324V1318H1328V1319H1332V1318H1336V1318H1340V1320H1344V1318H1348V1318H1352V1319H1356V1317H1360V1318H1364V1318H1368V1317H1372V1318H1376V1317H1380V1320H1384V1317H1388V1318H1392V1318H1396V1317H1400V1318H1404V1319H1408V1318H1412V1318H1416V1319H1420V1317H1424V1318H1428V1318H1432V1318H1436V1317H1440V1320H1444V1318H1448V1318H1452V1317H1456V1317H1460V1317H1464V1318H1468V1317H1472V1318H1476V1318H1480V1318H1484V1318H1488V1318H1492V1317H1496V1318H1500V1318H1504V1318H1508V1317H1512V1317H1516V1318H1520V1319H1524V1317H1528V1319H1532V1318H1536V1318H1540V1319H1544V1319H1548V1318H1552V1319H1556V1318H1560V1318H1563V1424Z" fill="url(#g5)" stroke="#2a5050" stroke-width="1"/><path d="M26.5 1241V1424M46.5 1241V1424M66.5 1241V1424M86.5 1241V1424M106.5 1241V1424M126.5 1241V1424M146.5 1241V1424M166.5 1241V1424M186.5 1241V1424M206.5 1241V1424M226.5 1241V1424M246.5 1241V1424M266.5 1241V1424M286.5 1241V1424M306.5 1241V1424M326.5 1241V1424M346.5 1241V1424M366.5 1241V1424M386.5 1241V1424M406.5 1241V1424M426.5 1241V1424M446.5 1241V1424M466.5 1241V1424M486.5 1241V1424M506.5 1241V1424M526.5 1241V1424M546.5 1241V1424M566.5 1241V1424M586.5 1241V1424M606.5 1241V1424M626.5 1241V1424M646.5 1241V1424M666.5 1241V1424M686.5 1241V1424M706.5 1241V1424M726.5 1241V1424M746.5 1241V1424M766.5 1241V1424M786.5 1241V1424M806.5 1241V1424M826.5 1241V1424M846.5 1241V1424M866.5 1241V1424M886.5 1241V1424M906.5 1241V1424M926.5 1241V1424M946.5 1241V1424M966.5 1241V1424M986.5 1241V1424M1006.5 1241V1424M1026.5 1241V1424M1046.5 1241V1424M1066.5 1241V1424M1086.5 1241V1424M1106.5 1241V1424M1126.5 1241V1424M1146.5 1241V1424M1166.5 1241V1424M1186.5 1241V1424M1206.5 1241V1424M1226.5 1241V1424M1246.5 1241V1424M1266.5 1241V1424M1286.5 1241V1424M1306.5 1241V1424M1326.5 1241V1424M1346.5 1241V1424M1366.5 1241V1424M1386.5 1241V1424M1406.5 1241V1424M1426.5 1241V1424M1446.5 1241V1424M1466.5 1241V1424M1486.5 1241V1424M1506.5 1241V1424M1526.5 1241V1424M1546.5 1241V1424M12 1404.5H1563M12 1384.5H1563M12 1364.5H1563M12 1344.5H1563M12 1324.5H1563M12 1304.5H1563M12 1284.5H1563M12 1264.5H1563M12 1244.5H1563" stroke="#adc6e8" stroke-width="1" fill="none"/><path d="M12 1241.5H1564" stroke="#9c9c9c" stroke-width="1"/><path d="M12 1424.5H1564" stroke="#b4c8e8" stroke-width="1"/><path d="M1563.5 1241V1425" stroke="#9c9c9c" stroke-width="1"/></svg>
<div class="vb" style="top:1242px;height:25px"><span class="vbt">300.0</span><i class="sw" style="left:9px;background:#1e6a7a"></i><i class="sw" style="left:42px;background:#e0f6fc"></i><i class="sw" style="left:74px;background:#a8c4e8"></i></div>
<div class="vb" style="top:1278px;height:25px;width:100px">114.396 W</div>
<div class="btn" style="top:1321px">Auto Fit</div>
<div class="btn" style="top:1357px">Reset</div>
<div class="vb" style="top:1400px;height:24px">0.000</div>
<div class="hw"><div style="position:absolute;left:0;top:0;right:0;height:43px;background:#f3f3f3"></div><div style="position:absolute;left:0;top:43px;right:0;height:1px;background:#777"></div></div>
<div class="rg" style="top:71px"></div>
<svg class="ic" style="left:1713px;top:79px" width="20" height="12" viewBox="0 0 20 12"><path d="M1 1.5L9.5 10L18 1.5" stroke="#2c3a3a" stroke-width="1.3" fill="none"/></svg>
<svg class="ic" style="left:1741px;top:74px" width="18" height="22" viewBox="0 0 18 22"><rect x="3" y="0.5" width="12" height="21" fill="#4d5757"/><path d="M0.5 4h2.5M0.5 8h2.5M0.5 12h2.5M0.5 16h2.5M15 4h2.5M15 8h2.5M15 12h2.5M15 16h2.5" stroke="#6a7a80" stroke-width="1"/></svg>
<div class="tx b" style="left:1764px;top:71px">CPU [#0]: Intel Core Ultra 9 275HX</div>
<div class="rs" style="top:96px;left:1786px"></div>
<div class="rb" style="top:96px"></div>
<div class="sep" style="top:120px"></div>
<svg class="ic" style="left:1741px;top:99px" width="12" height="20" viewBox="0 0 12 20"><path d="M1.5 1L10 9.5L1.5 18" stroke="#2c3a3a" stroke-width="1.3" fill="none"/></svg>
<svg class="ic" style="left:1767px;top:97px" width="14" height="24" viewBox="0 0 14 24"><path d="M6 0H13L8.6 8L13.2 8.2L0.4 23.8L4.4 12.6L0.4 12.4Z" fill="#eda845"/></svg>
<div class="tx" style="left:1788px;top:96px">Core Voltages</div>
<div class="tv" style="right:391px;top:96px;color:#000">0.834 V</div>
<div class="tv" style="right:271px;top:96px;color:#000">0.603 V</div>
<div class="tv" style="right:151px;top:96px;color:#000">1.234 V</div>
<div class="tv" style="right:31px;top:96px;color:#000">0.821 V</div>
<div class="sep" style="top:145px"></div>
<svg class="ic" style="left:1743px;top:122px" width="14" height="24" viewBox="0 0 14 24"><path d="M6 0H13L8.6 8L13.2 8.2L0.4 23.8L4.4 12.6L0.4 12.4Z" fill="#eda845"/></svg>
<div class="tx" style="left:1764px;top:121px">Uncore VID</div>
<div class="tv" style="right:391px;top:121px;color:#000">0.531 V</div>
<div class="tv" style="right:271px;top:121px;color:#000">0.531 V</div>
<div class="tv" style="right:151px;top:121px;color:#000">0.531 V</div>
<div class="tv" style="right:31px;top:121px;color:#000">0.531 V</div>
<div class="rs" style="top:146px;left:1786px"></div>
<div class="rb" style="top:146px"></div>
<div class="sep" style="top:170px"></div>
<svg class="ic" style="left:1741px;top:149px" width="12" height="20" viewBox="0 0 12 20"><path d="M1.5 1L10 9.5L1.5 18" stroke="#2c3a3a" stroke-width="1.3" fill="none"/></svg>
<svg class="ic" style="left:1762px;top:147px" width="24" height="26" viewBox="0 0 24 26"><path d="M18.4 6.6A8 8 0 1 0 19.1 16.6" stroke="#2c3a3a" stroke-width="1.6" fill="none"/><path d="M20.5 4.4L20.8 9.0L16.4 8.3Z" fill="#2c3a3a"/><path d="M12.3 6.8V12.6L15.2 15.6" stroke="#2c3a3a" stroke-width="1.6" fill="none"/></svg>
<div class="tx" style="left:1788px;top:146px">Core Clocks</div>
<div class="tv" style="right:391px;top:146px;color:#000">3,038.7 MHz</div>
<div class="tv" style="right:271px;top:146px;color:#000">1,296.7 MHz</div>
<div class="tv" style="right:151px;top:146px;color:#000">5,188.7 MHz</div>
<div class="tv" style="right:31px;top:146px;color:#000">2,960.8 MHz</div>
<div class="sep" style="top:195px"></div>
<svg class="ic" style="left:1738px;top:172px" width="24" height="26" viewBox="0 0 24 26"><path d="M18.4 6.6A8 8 0 1 0 19.1 16.6" stroke="#2c3a3a" stroke-width="1.6" fill="none"/><path d="M20.5 4.4L20.8 9.0L16.4 8.3Z" fill="#2c3a3a"/><path d="M12.3 6.8V12.6L15.2 15.6" stroke="#2c3a3a" stroke-width="1.6" fill="none"/></svg>
<div class="tx" style="left:1764px;top:171px">Bus Clock</div>
<div class="tv" style="right:391px;top:171px;color:#000">99.8 MHz</div>
<div class="tv" style="right:271px;top:171px;color:#000">99.7 MHz</div>
<div class="tv" style="right:151px;top:171px;color:#000">99.8 MHz</div>
<div class="tv" style="right:31px;top:171px;color:#000">99.8 MHz</div>
<div class="rs" style="top:196px;left:1762px"></div>
<div class="rb" style="top:196px"></div>
<div class="sep" style="top:220px"></div>
<svg class="ic" style="left:1738px;top:197px" width="24" height="26" viewBox="0 0 24 26"><path d="M18.4 6.6A8 8 0 1 0 19.1 16.6" stroke="#2c3a3a" stroke-width="1.6" fill="none"/><path d="M20.5 4.4L20.8 9.0L16.4 8.3Z" fill="#2c3a3a"/><path d="M12.3 6.8V12.6L15.2 15.6" stroke="#2c3a3a" stroke-width="1.6" fill="none"/></svg>
<div class="tx" style="left:1764px;top:196px">Ring/LLC Clock</div>
<div class="tv" style="right:391px;top:196px;color:#000">3,691.4 MHz</div>
<div class="tv" style="right:271px;top:196px;color:#000">3,690.2 MHz</div>
<div class="tv" style="right:151px;top:196px;color:#000">3,692.0 MHz</div>
<div class="tv" style="right:31px;top:196px;color:#000">3,691.0 MHz</div>
<div class="sep" style="top:245px"></div>
<svg class="ic" style="left:1738px;top:222px" width="24" height="26" viewBox="0 0 24 26"><path d="M18.4 6.6A8 8 0 1 0 19.1 16.6" stroke="#2c3a3a" stroke-width="1.6" fill="none"/><path d="M20.5 4.4L20.8 9.0L16.4 8.3Z" fill="#2c3a3a"/><path d="M12.3 6.8V12.6L15.2 15.6" stroke="#2c3a3a" stroke-width="1.6" fill="none"/></svg>
<div class="tx" style="left:1764px;top:221px">D2D Clock</div>
<div class="tv" style="right:391px;top:221px;color:#000">2,094.9 MHz</div>
<div class="tv" style="right:271px;top:221px;color:#000">2,094.9 MHz</div>
<div class="tv" style="right:151px;top:221px;color:#000">2,094.9 MHz</div>
<div class="tv" style="right:31px;top:221px;color:#000">2,094.9 MHz</div>
<div class="rs" style="top:246px;left:1786px"></div>
<div class="rb" style="top:246px"></div>
<div class="sep" style="top:270px"></div>
<svg class="ic" style="left:1741px;top:249px" width="12" height="20" viewBox="0 0 12 20"><path d="M1.5 1L10 9.5L1.5 18" stroke="#2c3a3a" stroke-width="1.3" fill="none"/></svg>
<svg class="ic" style="left:1762px;top:247px" width="24" height="26" viewBox="0 0 24 26"><path d="M18.4 6.6A8 8 0 1 0 19.1 16.6" stroke="#2c3a3a" stroke-width="1.6" fill="none"/><path d="M20.5 4.4L20.8 9.0L16.4 8.3Z" fill="#2c3a3a"/><path d="M12.3 6.8V12.6L15.2 15.6" stroke="#2c3a3a" stroke-width="1.6" fill="none"/></svg>
<div class="tx" style="left:1788px;top:246px">Core Effective Clocks</div>
<div class="tv" style="right:391px;top:246px;color:#000">659.0 MHz</div>
<div class="tv" style="right:271px;top:246px;color:#000">0.3 MHz</div>
<div class="tv" style="right:151px;top:246px;color:#000">4,476.7 MHz</div>
<div class="tv" style="right:31px;top:246px;color:#000">540.4 MHz</div>
<div class="rb" style="top:271px"></div>
<div class="sep" style="top:295px"></div>
<svg class="ic" style="left:1738px;top:272px" width="24" height="26" viewBox="0 0 24 26"><path d="M18.4 6.6A8 8 0 1 0 19.1 16.6" stroke="#2c3a3a" stroke-width="1.6" fill="none"/><path d="M20.5 4.4L20.8 9.0L16.4 8.3Z" fill="#2c3a3a"/><path d="M12.3 6.8V12.6L15.2 15.6" stroke="#2c3a3a" stroke-width="1.6" fill="none"/></svg>
<div class="tx" style="left:1764px;top:271px">Average Effective Clock</div>
<div class="tv" style="right:391px;top:271px;color:#000">659.0 MHz</div>
<div class="tv" style="right:271px;top:271px;color:#000">492.6 MHz</div>
<div class="tv" style="right:151px;top:271px;color:#000">806.4 MHz</div>
<div class="tv" style="right:31px;top:271px;color:#000">540.4 MHz</div>
<div class="rs" style="top:296px;left:1786px"></div>
<div class="rb" style="top:296px"></div>
<div class="sep" style="top:320px"></div>
<svg class="ic" style="left:1741px;top:299px" width="12" height="20" viewBox="0 0 12 20"><path d="M1.5 1L10 9.5L1.5 18" stroke="#2c3a3a" stroke-width="1.3" fill="none"/></svg>
<svg class="ic" style="left:1762px;top:297px" width="24" height="26" viewBox="0 0 24 26"><path d="M18.4 6.6A8 8 0 1 0 19.1 16.6" stroke="#2c3a3a" stroke-width="1.6" fill="none"/><path d="M20.5 4.4L20.8 9.0L16.4 8.3Z" fill="#2c3a3a"/><path d="M12.3 6.8V12.6L15.2 15.6" stroke="#2c3a3a" stroke-width="1.6" fill="none"/></svg>
<div class="tx" style="left:1788px;top:296px">Core Usage</div>
<div class="tv" style="right:391px;top:296px;color:#000">13.4 %</div>
<div class="tv" style="right:271px;top:296px;color:#000">0.0 %</div>
<div class="tv" style="right:151px;top:296px;color:#000">88.2 %</div>
<div class="tv" style="right:31px;top:296px;color:#000">11.1 %</div>
<div class="rb" style="top:321px"></div>
<div class="sep" style="top:345px"></div>
<svg class="ic" style="left:1738px;top:322px" width="24" height="26" viewBox="0 0 24 26"><path d="M18.4 6.6A8 8 0 1 0 19.1 16.6" stroke="#2c3a3a" stroke-width="1.6" fill="none"/><path d="M20.5 4.4L20.8 9.0L16.4 8.3Z" fill="#2c3a3a"/><path d="M12.3 6.8V12.6L15.2 15.6" stroke="#2c3a3a" stroke-width="1.6" fill="none"/></svg>
<div class="tx" style="left:1764px;top:321px">Max CPU/Thread Usage</div>
<div class="tv" style="right:391px;top:321px;color:#000">77.7 %</div>
<div class="tv" style="right:271px;top:321px;color:#000">70.9 %</div>
<div class="tv" style="right:151px;top:321px;color:#000">88.2 %</div>
<div class="tv" style="right:31px;top:321px;color:#000">79.7 %</div>
<div class="rs" style="top:346px;left:1762px"></div>
<div class="rb" style="top:346px"></div>
<div class="sep" style="top:370px"></div>
<svg class="ic" style="left:1738px;top:347px" width="24" height="26" viewBox="0 0 24 26"><path d="M18.4 6.6A8 8 0 1 0 19.1 16.6" stroke="#2c3a3a" stroke-width="1.6" fill="none"/><path d="M20.5 4.4L20.8 9.0L16.4 8.3Z" fill="#2c3a3a"/><path d="M12.3 6.8V12.6L15.2 15.6" stroke="#2c3a3a" stroke-width="1.6" fill="none"/></svg>
<div class="tx" style="left:1764px;top:346px">Total CPU Usage</div>
<div class="tv" style="right:391px;top:346px;color:#000">13.4 %</div>
<div class="tv" style="right:271px;top:346px;color:#000">10.0 %</div>
<div class="tv" style="right:151px;top:346px;color:#000">22.4 %</div>
<div class="tv" style="right:31px;top:346px;color:#000">11.1 %</div>
<div class="rg" style="top:396px"></div>
<svg class="ic" style="left:1717px;top:399px" width="12" height="20" viewBox="0 0 12 20"><path d="M1.5 1L10 9.5L1.5 18" stroke="#2c3a3a" stroke-width="1.3" fill="none"/></svg>
<svg class="ic" style="left:1741px;top:399px" width="18" height="22" viewBox="0 0 18 22"><rect x="3" y="0.5" width="12" height="21" fill="#4d5757"/><path d="M0.5 4h2.5M0.5 8h2.5M0.5 12h2.5M0.5 16h2.5M15 4h2.5M15 8h2.5M15 12h2.5M15 16h2.5" stroke="#6a7a80" stroke-width="1"/></svg>
<div class="tx b" style="left:1764px;top:396px">CPU [#0]: Intel Core Ultra 9 275HX: DTS</div>
<div class="rs" style="top:421px;left:1762px"></div>
<div class="rg" style="top:446px"></div>
<svg class="ic" style="left:1713px;top:454px" width="20" height="12" viewBox="0 0 20 12"><path d="M1 1.5L9.5 10L18 1.5" stroke="#2c3a3a" stroke-width="1.3" fill="none"/></svg>
<svg class="ic" style="left:1741px;top:449px" width="18" height="22" viewBox="0 0 18 22"><rect x="3" y="0.5" width="12" height="21" fill="#4d5757"/><path d="M0.5 4h2.5M0.5 8h2.5M0.5 12h2.5M0.5 16h2.5M15 4h2.5M15 8h2.5M15 12h2.5M15 16h2.5" stroke="#6a7a80" stroke-width="1"/></svg>
<div class="tx b" style="left:1764px;top:446px">CPU [#0]: Intel Core Ultra 9 275HX: Enhanced</div>
<div class="rs" style="top:471px;left:1762px"></div>
<div class="rb" style="top:471px"></div>
<div class="sep" style="top:495px"></div>
<svg class="ic" style="left:1744px;top:472px" width="12" height="24" viewBox="0 0 12 24"><rect x="4.5" y="1" width="3" height="16" rx="1.5" fill="#e8e8e8"/><rect x="5" y="7" width="2" height="11" fill="#c01818"/><circle cx="6" cy="19.5" r="3" fill="#c01818"/></svg>
<div class="tx" style="left:1764px;top:471px">CPU Package</div>
<div class="tv" style="right:391px;top:471px;color:#c00000">104 °C</div>
<div class="tv" style="right:271px;top:471px;color:#000">93 °C</div>
<div class="tv" style="right:151px;top:471px;color:#c00000">109 °C</div>
<div class="tv" style="right:31px;top:471px;color:#c00000">104 °C</div>
<div class="rb" style="top:496px"></div>
<div class="sep" style="top:520px"></div>
<svg class="ic" style="left:1744px;top:497px" width="12" height="24" viewBox="0 0 12 24"><rect x="4.5" y="1" width="3" height="16" rx="1.5" fill="#e8e8e8"/><rect x="5" y="7" width="2" height="11" fill="#c01818"/><circle cx="6" cy="19.5" r="3" fill="#c01818"/></svg>
<div class="tx" style="left:1764px;top:496px">CPU IA Cores</div>
<div class="tv" style="right:391px;top:496px;color:#c00000">104 °C</div>
<div class="tv" style="right:271px;top:496px;color:#000">93 °C</div>
<div class="tv" style="right:151px;top:496px;color:#c00000">109 °C</div>
<div class="tv" style="right:31px;top:496px;color:#c00000">104 °C</div>
<div class="rs" style="top:521px;left:1762px"></div>
<div class="sep" style="top:545px"></div>
<svg class="ic" style="left:1744px;top:522px" width="12" height="24" viewBox="0 0 12 24"><rect x="4.5" y="1" width="3" height="16" rx="1.5" fill="#e8e8e8"/><rect x="5" y="7" width="2" height="11" fill="#c01818"/><circle cx="6" cy="19.5" r="3" fill="#c01818"/></svg>
<div class="tx" style="left:1764px;top:521px">CPU GT Cores (Graphics)</div>
<div class="tv" style="right:391px;top:521px;color:#000">77 °C</div>
<div class="tv" style="right:271px;top:521px;color:#000">70 °C</div>
<div class="tv" style="right:151px;top:521px;color:#000">80 °C</div>
<div class="tv" style="right:31px;top:521px;color:#000">78 °C</div>
<div class="sep" style="top:570px"></div>
<svg class="ic" style="left:1741px;top:549px" width="12" height="20" viewBox="0 0 12 20"><path d="M1.5 1L10 9.5L1.5 18" stroke="#2c3a3a" stroke-width="1.3" fill="none"/></svg>
<svg class="ic" style="left:1767px;top:547px" width="14" height="24" viewBox="0 0 14 24"><path d="M6 0H13L8.6 8L13.2 8.2L0.4 23.8L4.4 12.6L0.4 12.4Z" fill="#eda845"/></svg>
<div class="tx" style="left:1788px;top:546px">Voltage Offsets</div>
<div class="tv" style="right:271px;top:546px;color:#000">0.000 V</div>
<div class="tv" style="right:151px;top:546px;color:#000">0.000 V</div>
<div class="rs" style="top:571px;left:1762px"></div>
<div class="rb" style="top:571px"></div>
<div class="sep" style="top:595px"></div>
<svg class="ic" style="left:1743px;top:572px" width="14" height="24" viewBox="0 0 14 24"><path d="M6 0H13L8.6 8L13.2 8.2L0.4 23.8L4.4 12.6L0.4 12.4Z" fill="#eda845"/></svg>
<div class="tx" style="left:1764px;top:571px">VR VCC Current (SVID IOUT)</div>
<div class="tv" style="right:391px;top:571px;color:#000">40.219 A</div>
<div class="tv" style="right:271px;top:571px;color:#000">0.000 A</div>
<div class="tv" style="right:151px;top:571px;color:#000">75.282 A</div>
<div class="tv" style="right:31px;top:571px;color:#000">34.288 A</div>
<div class="rb" style="top:596px"></div>
<div class="sep" style="top:620px"></div>
<svg class="ic" style="left:1743px;top:597px" width="14" height="24" viewBox="0 0 14 24"><path d="M6 0H13L8.6 8L13.2 8.2L0.4 23.8L4.4 12.6L0.4 12.4Z" fill="#eda845"/></svg>
<div class="tx" style="left:1764px;top:596px">CPU Package Power</div>
<div class="tv" style="right:391px;top:596px;color:#000">48.960 W</div>
<div class="tv" style="right:271px;top:596px;color:#000">43.381 W</div>
<div class="tv" style="right:151px;top:596px;color:#000">75.021 W</div>
<div class="tv" style="right:31px;top:596px;color:#000">50.472 W</div>
<div class="rs" style="top:621px;left:1762px"></div>
<div class="rb" style="top:621px"></div>
<div class="sep" style="top:645px"></div>
<svg class="ic" style="left:1743px;top:622px" width="14" height="24" viewBox="0 0 14 24"><path d="M6 0H13L8.6 8L13.2 8.2L0.4 23.8L4.4 12.6L0.4 12.4Z" fill="#eda845"/></svg>
<div class="tx" style="left:1764px;top:621px">IA Cores Power</div>
<div class="tv" style="right:391px;top:621px;color:#000">41.050 W</div>
<div class="tv" style="right:271px;top:621px;color:#000">35.318 W</div>
<div class="tv" style="right:151px;top:621px;color:#000">66.615 W</div>
<div class="tv" style="right:31px;top:621px;color:#000">42.449 W</div>
<div class="sep" style="top:670px"></div>
<svg class="ic" style="left:1743px;top:647px" width="14" height="24" viewBox="0 0 14 24"><path d="M6 0H13L8.6 8L13.2 8.2L0.4 23.8L4.4 12.6L0.4 12.4Z" fill="#eda845"/></svg>
<div class="tx" style="left:1764px;top:646px">GT Cores Power</div>
<div class="tv" style="right:391px;top:646px;color:#000">0.000 W</div>
<div class="tv" style="right:271px;top:646px;color:#000">0.000 W</div>
<div class="tv" style="right:151px;top:646px;color:#000">0.000 W</div>
<div class="tv" style="right:31px;top:646px;color:#000">0.000 W</div>
<div class="rs" style="top:671px;left:1762px"></div>
<div class="rb" style="top:671px"></div>
<div class="sep" style="top:695px"></div>
<svg class="ic" style="left:1743px;top:672px" width="14" height="24" viewBox="0 0 14 24"><path d="M6 0H13L8.6 8L13.2 8.2L0.4 23.8L4.4 12.6L0.4 12.4Z" fill="#eda845"/></svg>
<div class="tx" style="left:1764px;top:671px">System Agent Power</div>
<div class="tv" style="right:391px;top:671px;color:#000">3.857 W</div>
<div class="tv" style="right:271px;top:671px;color:#000">3.773 W</div>
<div class="tv" style="right:151px;top:671px;color:#000">4.237 W</div>
<div class="tv" style="right:31px;top:671px;color:#000">3.897 W</div>
<div class="sep" style="top:720px"></div>
<svg class="ic" style="left:1743px;top:697px" width="14" height="24" viewBox="0 0 14 24"><path d="M6 0H13L8.6 8L13.2 8.2L0.4 23.8L4.4 12.6L0.4 12.4Z" fill="#eda845"/></svg>
<div class="tx" style="left:1764px;top:696px">Rest-of-Chip Power</div>
<div class="tv" style="right:391px;top:696px;color:#000">0.000 W</div>
<div class="tv" style="right:271px;top:696px;color:#000">0.000 W</div>
<div class="tv" style="right:151px;top:696px;color:#000">0.001 W</div>
<div class="tv" style="right:31px;top:696px;color:#000">0.000 W</div>
<div class="rs" style="top:721px;left:1762px"></div>
<div class="rb" style="top:721px"></div>
<div class="sep" style="top:745px"></div>
<svg class="ic" style="left:1743px;top:722px" width="14" height="24" viewBox="0 0 14 24"><path d="M6 0H13L8.6 8L13.2 8.2L0.4 23.8L4.4 12.6L0.4 12.4Z" fill="#eda845"/></svg>
<div class="tx" style="left:1764px;top:721px">PCH Power</div>
<div class="tv" style="right:391px;top:721px;color:#000">0.000 W</div>
<div class="tv" style="right:271px;top:721px;color:#000">0.000 W</div>
<div class="tv" style="right:151px;top:721px;color:#000">0.001 W</div>
<div class="tv" style="right:31px;top:721px;color:#000">0.000 W</div>
<div class="sep" style="top:770px"></div>
<svg class="ic" style="left:1743px;top:747px" width="14" height="24" viewBox="0 0 14 24"><path d="M6 0H13L8.6 8L13.2 8.2L0.4 23.8L4.4 12.6L0.4 12.4Z" fill="#eda845"/></svg>
<div class="tx" style="left:1764px;top:746px">PL1 Power Limit (Static)</div>
<div class="tv" style="right:391px;top:746px;color:#000">140.0 W</div>
<div class="tv" style="right:271px;top:746px;color:#000">140.0 W</div>
<div class="tv" style="right:151px;top:746px;color:#000">140.0 W</div>
<div class="tv" style="right:31px;top:746px;color:#000">140.0 W</div>
<div class="rs" style="top:771px;left:1762px"></div>
<div class="sep" style="top:795px"></div>
<svg class="ic" style="left:1743px;top:772px" width="14" height="24" viewBox="0 0 14 24"><path d="M6 0H13L8.6 8L13.2 8.2L0.4 23.8L4.4 12.6L0.4 12.4Z" fill="#eda845"/></svg>
<div class="tx" style="left:1764px;top:771px">PL1 Power Limit (Dynamic)</div>
<div class="tv" style="right:391px;top:771px;color:#000">60.0 W</div>
<div class="tv" style="right:271px;top:771px;color:#000">60.0 W</div>
<div class="tv" style="right:151px;top:771px;color:#000">64.0 W</div>
<div class="tv" style="right:31px;top:771px;color:#000">60.0 W</div>
<div class="sep" style="top:820px"></div>
<svg class="ic" style="left:1743px;top:797px" width="14" height="24" viewBox="0 0 14 24"><path d="M6 0H13L8.6 8L13.2 8.2L0.4 23.8L4.4 12.6L0.4 12.4Z" fill="#eda845"/></svg>
<div class="tx" style="left:1764px;top:796px">PL2 Power Limit (Static)</div>
<div class="tv" style="right:391px;top:796px;color:#000">210.0 W</div>
<div class="tv" style="right:271px;top:796px;color:#000">210.0 W</div>
<div class="tv" style="right:151px;top:796px;color:#000">210.0 W</div>
<div class="tv" style="right:31px;top:796px;color:#000">210.0 W</div>
<div class="rs" style="top:821px;left:1762px"></div>
<div class="sep" style="top:845px"></div>
<svg class="ic" style="left:1743px;top:822px" width="14" height="24" viewBox="0 0 14 24"><path d="M6 0H13L8.6 8L13.2 8.2L0.4 23.8L4.4 12.6L0.4 12.4Z" fill="#eda845"/></svg>
<div class="tx" style="left:1764px;top:821px">PL2 Power Limit (Dynamic)</div>
<div class="tv" style="right:391px;top:821px;color:#000">190.0 W</div>
<div class="tv" style="right:271px;top:821px;color:#000">190.0 W</div>
<div class="tv" style="right:151px;top:821px;color:#000">190.0 W</div>
<div class="tv" style="right:31px;top:821px;color:#000">190.0 W</div>
<div class="rb" style="top:846px"></div>
<div class="sep" style="top:870px"></div>
<svg class="ic" style="left:1738px;top:847px" width="24" height="26" viewBox="0 0 24 26"><path d="M18.4 6.6A8 8 0 1 0 19.1 16.6" stroke="#2c3a3a" stroke-width="1.6" fill="none"/><path d="M20.5 4.4L20.8 9.0L16.4 8.3Z" fill="#2c3a3a"/><path d="M12.3 6.8V12.6L15.2 15.6" stroke="#2c3a3a" stroke-width="1.6" fill="none"/></svg>
<div class="tx" style="left:1764px;top:846px">GPU Clock</div>
<div class="tv" style="right:391px;top:846px;color:#000">1,646.0 MHz</div>
<div class="tv" style="right:271px;top:846px;color:#000">1,645.6 MHz</div>
<div class="tv" style="right:151px;top:846px;color:#000">1,646.4 MHz</div>
<div class="tv" style="right:31px;top:846px;color:#000">1,646.0 MHz</div>
<div class="rs" style="top:871px;left:1762px"></div>
<div class="sep" style="top:895px"></div>
<svg class="ic" style="left:1738px;top:872px" width="24" height="26" viewBox="0 0 24 26"><path d="M18.4 6.6A8 8 0 1 0 19.1 16.6" stroke="#2c3a3a" stroke-width="1.6" fill="none"/><path d="M20.5 4.4L20.8 9.0L16.4 8.3Z" fill="#2c3a3a"/><path d="M12.3 6.8V12.6L15.2 15.6" stroke="#2c3a3a" stroke-width="1.6" fill="none"/></svg>
<div class="tx" style="left:1764px;top:871px">GPU D3D Usage</div>
<div class="tv" style="right:391px;top:871px;color:#000">0.0 %</div>
<div class="tv" style="right:271px;top:871px;color:#000">0.0 %</div>
<div class="tv" style="right:151px;top:871px;color:#000">0.0 %</div>
<div class="tv" style="right:31px;top:871px;color:#000">0.0 %</div>
<div class="sep" style="top:920px"></div>
<svg class="ic" style="left:1741px;top:899px" width="12" height="20" viewBox="0 0 12 20"><path d="M1.5 1L10 9.5L1.5 18" stroke="#2c3a3a" stroke-width="1.3" fill="none"/></svg>
<svg class="ic" style="left:1762px;top:897px" width="24" height="26" viewBox="0 0 24 26"><path d="M18.4 6.6A8 8 0 1 0 19.1 16.6" stroke="#2c3a3a" stroke-width="1.6" fill="none"/><path d="M20.5 4.4L20.8 9.0L16.4 8.3Z" fill="#2c3a3a"/><path d="M12.3 6.8V12.6L15.2 15.6" stroke="#2c3a3a" stroke-width="1.6" fill="none"/></svg>
<div class="tx" style="left:1788px;top:896px">GPU D3D Utilizations</div>
<div class="tv" style="right:271px;top:896px;color:#000">0.0 %</div>
<div class="tv" style="right:151px;top:896px;color:#000">0.0 %</div>
<div class="sep" style="top:945px"></div>
<svg class="ic" style="left:1738px;top:922px" width="24" height="26" viewBox="0 0 24 26"><path d="M18.4 6.6A8 8 0 1 0 19.1 16.6" stroke="#2c3a3a" stroke-width="1.6" fill="none"/><path d="M20.5 4.4L20.8 9.0L16.4 8.3Z" fill="#2c3a3a"/><path d="M12.3 6.8V12.6L15.2 15.6" stroke="#2c3a3a" stroke-width="1.6" fill="none"/></svg>
<div class="tx" style="left:1764px;top:921px">GPU D3D Memory Dynamic</div>
<div class="tv" style="right:391px;top:921px;color:#000">16 MB</div>
<div class="tv" style="right:271px;top:921px;color:#000">16 MB</div>
<div class="tv" style="right:151px;top:921px;color:#000">16 MB</div>
<div class="tv" style="right:31px;top:921px;color:#000">16 MB</div>
<div class="rs" style="top:946px;left:1762px"></div>
<div class="sep" style="top:970px"></div>
<svg class="ic" style="left:1738px;top:947px" width="24" height="26" viewBox="0 0 24 26"><path d="M18.4 6.6A8 8 0 1 0 19.1 16.6" stroke="#2c3a3a" stroke-width="1.6" fill="none"/><path d="M20.5 4.4L20.8 9.0L16.4 8.3Z" fill="#2c3a3a"/><path d="M12.3 6.8V12.6L15.2 15.6" stroke="#2c3a3a" stroke-width="1.6" fill="none"/></svg>
<div class="tx" style="left:1764px;top:946px">Current cTDP Level</div>
<div class="tv" style="right:391px;top:946px;color:#000">0</div>
<div class="tv" style="right:271px;top:946px;color:#000">0</div>
<div class="tv" style="right:151px;top:946px;color:#000">0</div>
<div class="tv" style="right:31px;top:946px;color:#000">0</div>
<div class="sep" style="top:995px"></div>
<svg class="ic" style="left:1741px;top:974px" width="12" height="20" viewBox="0 0 12 20"><path d="M1.5 1L10 9.5L1.5 18" stroke="#2c3a3a" stroke-width="1.3" fill="none"/></svg>
<svg class="ic" style="left:1762px;top:972px" width="24" height="26" viewBox="0 0 24 26"><path d="M18.4 6.6A8 8 0 1 0 19.1 16.6" stroke="#2c3a3a" stroke-width="1.6" fill="none"/><path d="M20.5 4.4L20.8 9.0L16.4 8.3Z" fill="#2c3a3a"/><path d="M12.3 6.8V12.6L15.2 15.6" stroke="#2c3a3a" stroke-width="1.6" fill="none"/></svg>
<div class="tx" style="left:1788px;top:971px">OC Ratio Limits</div>
<div class="tv" style="right:271px;top:971px;color:#000">26.0 x</div>
<div class="tv" style="right:151px;top:971px;color:#000">96.0 x</div>
<div class="rg" style="top:1021px"></div>
<svg class="ic" style="left:1713px;top:1029px" width="20" height="12" viewBox="0 0 20 12"><path d="M1 1.5L9.5 10L18 1.5" stroke="#2c3a3a" stroke-width="1.3" fill="none"/></svg>
<svg class="ic" style="left:1741px;top:1024px" width="18" height="22" viewBox="0 0 18 22"><rect x="3" y="0.5" width="12" height="21" fill="#4d5757"/><path d="M0.5 4h2.5M0.5 8h2.5M0.5 12h2.5M0.5 16h2.5M15 4h2.5M15 8h2.5M15 12h2.5M15 16h2.5" stroke="#6a7a80" stroke-width="1"/></svg>
<div class="tx b" style="left:1764px;top:1021px">GPU [#2]: NVIDIA GeForce RTX 5070 Ti Laptop</div>
<div class="rb" style="top:1046px"></div>
<div class="sep" style="top:1070px"></div>
<svg class="ic" style="left:1744px;top:1047px" width="12" height="24" viewBox="0 0 12 24"><rect x="4.5" y="1" width="3" height="16" rx="1.5" fill="#e8e8e8"/><rect x="5" y="7" width="2" height="11" fill="#c01818"/><circle cx="6" cy="19.5" r="3" fill="#c01818"/></svg>
<div class="tx" style="left:1764px;top:1046px">GPU Temperature</div>
<div class="tv" style="right:391px;top:1046px;color:#000">78.9 °C</div>
<div class="tv" style="right:271px;top:1046px;color:#000">76.9 °C</div>
<div class="tv" style="right:151px;top:1046px;color:#000">87.4 °C</div>
<div class="tv" style="right:31px;top:1046px;color:#000">83.8 °C</div>
<div class="rs" style="top:1071px;left:1762px"></div>
<div class="rb" style="top:1071px"></div>
<div class="sep" style="top:1095px"></div>
<svg class="ic" style="left:1744px;top:1072px" width="12" height="24" viewBox="0 0 12 24"><rect x="4.5" y="1" width="3" height="16" rx="1.5" fill="#e8e8e8"/><rect x="5" y="7" width="2" height="11" fill="#c01818"/><circle cx="6" cy="19.5" r="3" fill="#c01818"/></svg>
<div class="tx" style="left:1764px;top:1071px">GPU Memory Junction Temperature</div>
<div class="tv" style="right:391px;top:1071px;color:#000">86.0 °C</div>
<div class="tv" style="right:271px;top:1071px;color:#000">80.0 °C</div>
<div class="tv" style="right:151px;top:1071px;color:#000">92.0 °C</div>
<div class="tv" style="right:31px;top:1071px;color:#000">88.3 °C</div>
<div class="sep" style="top:1120px"></div>
<svg class="ic" style="left:1744px;top:1097px" width="12" height="24" viewBox="0 0 12 24"><rect x="4.5" y="1" width="3" height="16" rx="1.5" fill="#e8e8e8"/><rect x="5" y="7" width="2" height="11" fill="#c01818"/><circle cx="6" cy="19.5" r="3" fill="#c01818"/></svg>
<div class="tx" style="left:1764px;top:1096px">GPU Thermal Limit</div>
<div class="tv" style="right:391px;top:1096px;color:#000">87.0 °C</div>
<div class="tv" style="right:271px;top:1096px;color:#000">87.0 °C</div>
<div class="tv" style="right:151px;top:1096px;color:#000">87.0 °C</div>
<div class="tv" style="right:31px;top:1096px;color:#000">87.0 °C</div>
<div class="rs" style="top:1121px;left:1762px"></div>
<div class="rb" style="top:1121px"></div>
<div class="sep" style="top:1145px"></div>
<svg class="ic" style="left:1743px;top:1122px" width="14" height="24" viewBox="0 0 14 24"><path d="M6 0H13L8.6 8L13.2 8.2L0.4 23.8L4.4 12.6L0.4 12.4Z" fill="#eda845"/></svg>
<div class="tx" style="left:1764px;top:1121px">GPU Core Voltage</div>
<div class="tv" style="right:391px;top:1121px;color:#000">0.865 V</div>
<div class="tv" style="right:271px;top:1121px;color:#000">0.835 V</div>
<div class="tv" style="right:151px;top:1121px;color:#000">0.935 V</div>
<div class="tv" style="right:31px;top:1121px;color:#000">0.873 V</div>
<div class="rb" style="top:1146px"></div>
<div class="sep" style="top:1170px"></div>
<svg class="ic" style="left:1743px;top:1147px" width="14" height="24" viewBox="0 0 14 24"><path d="M6 0H13L8.6 8L13.2 8.2L0.4 23.8L4.4 12.6L0.4 12.4Z" fill="#eda845"/></svg>
<div class="tx" style="left:1764px;top:1146px">GPU Power (Total)</div>
<div class="tv" style="right:391px;top:1146px;color:#000">114.396 W</div>
<div class="tv" style="right:271px;top:1146px;color:#000">114.396 W</div>
<div class="tv" style="right:151px;top:1146px;color:#000">140.629 W</div>
<div class="tv" style="right:31px;top:1146px;color:#000">125.351 W</div>
<div class="rs" style="top:1171px;left:1762px"></div>
<div class="rb" style="top:1171px"></div>
<div class="sep" style="top:1195px"></div>
<svg class="ic" style="left:1738px;top:1172px" width="24" height="26" viewBox="0 0 24 26"><path d="M18.4 6.6A8 8 0 1 0 19.1 16.6" stroke="#2c3a3a" stroke-width="1.6" fill="none"/><path d="M20.5 4.4L20.8 9.0L16.4 8.3Z" fill="#2c3a3a"/><path d="M12.3 6.8V12.6L15.2 15.6" stroke="#2c3a3a" stroke-width="1.6" fill="none"/></svg>
<div class="tx" style="left:1764px;top:1171px">GPU Clock</div>
<div class="tv" style="right:391px;top:1171px;color:#000">2,430.0 MHz</div>
<div class="tv" style="right:271px;top:1171px;color:#000">2,295.0 MHz</div>
<div class="tv" style="right:151px;top:1171px;color:#000">2,617.0 MHz</div>
<div class="tv" style="right:31px;top:1171px;color:#000">2,453.7 MHz</div>
<div class="sep" style="top:1220px"></div>
<svg class="ic" style="left:1738px;top:1197px" width="24" height="26" viewBox="0 0 24 26"><path d="M18.4 6.6A8 8 0 1 0 19.1 16.6" stroke="#2c3a3a" stroke-width="1.6" fill="none"/><path d="M20.5 4.4L20.8 9.0L16.4 8.3Z" fill="#2c3a3a"/><path d="M12.3 6.8V12.6L15.2 15.6" stroke="#2c3a3a" stroke-width="1.6" fill="none"/></svg>
<div class="tx" style="left:1764px;top:1196px">GPU Memory Clock</div>
<div class="tv" style="right:391px;top:1196px;color:#000">1,412.6 MHz</div>
<div class="tv" style="right:271px;top:1196px;color:#000">1,125.1 MHz</div>
<div class="tv" style="right:151px;top:1196px;color:#000">1,787.6 MHz</div>
<div class="tv" style="right:31px;top:1196px;color:#000">1,509.2 MHz</div>
<div class="rs" style="top:1221px;left:1762px"></div>
<div class="rb" style="top:1221px"></div>
<div class="sep" style="top:1245px"></div>
<svg class="ic" style="left:1738px;top:1222px" width="24" height="26" viewBox="0 0 24 26"><path d="M18.4 6.6A8 8 0 1 0 19.1 16.6" stroke="#2c3a3a" stroke-width="1.6" fill="none"/><path d="M20.5 4.4L20.8 9.0L16.4 8.3Z" fill="#2c3a3a"/><path d="M12.3 6.8V12.6L15.2 15.6" stroke="#2c3a3a" stroke-width="1.6" fill="none"/></svg>
<div class="tx" style="left:1764px;top:1221px">GPU Video Clock</div>
<div class="tv" style="right:391px;top:1221px;color:#000">2,107.0 MHz</div>
<div class="tv" style="right:271px;top:1221px;color:#000">1,995.0 MHz</div>
<div class="tv" style="right:151px;top:1221px;color:#000">2,287.0 MHz</div>
<div class="tv" style="right:31px;top:1221px;color:#000">2,134.4 MHz</div>
<div class="rb" style="top:1246px"></div>
<div class="sep" style="top:1270px"></div>
<svg class="ic" style="left:1738px;top:1247px" width="24" height="26" viewBox="0 0 24 26"><path d="M18.4 6.6A8 8 0 1 0 19.1 16.6" stroke="#2c3a3a" stroke-width="1.6" fill="none"/><path d="M20.5 4.4L20.8 9.0L16.4 8.3Z" fill="#2c3a3a"/><path d="M12.3 6.8V12.6L15.2 15.6" stroke="#2c3a3a" stroke-width="1.6" fill="none"/></svg>
<div class="tx" style="left:1764px;top:1246px">GPU Effective Clock</div>
<div class="tv" style="right:391px;top:1246px;color:#000">2,428.3 MHz</div>
<div class="tv" style="right:271px;top:1246px;color:#000">2,343.9 MHz</div>
<div class="tv" style="right:151px;top:1246px;color:#000">2,636.8 MHz</div>
<div class="tv" style="right:31px;top:1246px;color:#000">2,449.3 MHz</div>
<div class="rs" style="top:1271px;left:1762px"></div>
<div class="rb" style="top:1271px"></div>
<div class="sep" style="top:1295px"></div>
<svg class="ic" style="left:1738px;top:1272px" width="24" height="26" viewBox="0 0 24 26"><path d="M18.4 6.6A8 8 0 1 0 19.1 16.6" stroke="#2c3a3a" stroke-width="1.6" fill="none"/><path d="M20.5 4.4L20.8 9.0L16.4 8.3Z" fill="#2c3a3a"/><path d="M12.3 6.8V12.6L15.2 15.6" stroke="#2c3a3a" stroke-width="1.6" fill="none"/></svg>
<div class="tx" style="left:1764px;top:1271px">GPU Crossbar Clock</div>
<div class="tv" style="right:391px;top:1271px;color:#000">2,190.0 MHz</div>
<div class="tv" style="right:271px;top:1271px;color:#000">2,077.0 MHz</div>
<div class="tv" style="right:151px;top:1271px;color:#000">2,370.0 MHz</div>
<div class="tv" style="right:31px;top:1271px;color:#000">2,216.0 MHz</div>
<div class="rb" style="top:1296px"></div>
<div class="sep" style="top:1320px"></div>
<svg class="ic" style="left:1738px;top:1297px" width="24" height="26" viewBox="0 0 24 26"><path d="M18.4 6.6A8 8 0 1 0 19.1 16.6" stroke="#2c3a3a" stroke-width="1.6" fill="none"/><path d="M20.5 4.4L20.8 9.0L16.4 8.3Z" fill="#2c3a3a"/><path d="M12.3 6.8V12.6L15.2 15.6" stroke="#2c3a3a" stroke-width="1.6" fill="none"/></svg>
<div class="tx" style="left:1764px;top:1296px">GPU Core Load</div>
<div class="tv" style="right:391px;top:1296px;color:#000">97.0 %</div>
<div class="tv" style="right:271px;top:1296px;color:#000">94.0 %</div>
<div class="tv" style="right:151px;top:1296px;color:#000">99.0 %</div>
<div class="tv" style="right:31px;top:1296px;color:#000">98.7 %</div>
<div class="rs" style="top:1321px;left:1762px"></div>
<div class="rb" style="top:1321px"></div>
<div class="sep" style="top:1345px"></div>
<svg class="ic" style="left:1738px;top:1322px" width="24" height="26" viewBox="0 0 24 26"><path d="M18.4 6.6A8 8 0 1 0 19.1 16.6" stroke="#2c3a3a" stroke-width="1.6" fill="none"/><path d="M20.5 4.4L20.8 9.0L16.4 8.3Z" fill="#2c3a3a"/><path d="M12.3 6.8V12.6L15.2 15.6" stroke="#2c3a3a" stroke-width="1.6" fill="none"/></svg>
<div class="tx" style="left:1764px;top:1321px">GPU Memory Controller Load</div>
<div class="tv" style="right:391px;top:1321px;color:#000">39.0 %</div>
<div class="tv" style="right:271px;top:1321px;color:#000">31.0 %</div>
<div class="tv" style="right:151px;top:1321px;color:#000">48.0 %</div>
<div class="tv" style="right:31px;top:1321px;color:#000">39.5 %</div>
<div class="sep" style="top:1370px"></div>
<svg class="ic" style="left:1738px;top:1347px" width="24" height="26" viewBox="0 0 24 26"><path d="M18.4 6.6A8 8 0 1 0 19.1 16.6" stroke="#2c3a3a" stroke-width="1.6" fill="none"/><path d="M20.5 4.4L20.8 9.0L16.4 8.3Z" fill="#2c3a3a"/><path d="M12.3 6.8V12.6L15.2 15.6" stroke="#2c3a3a" stroke-width="1.6" fill="none"/></svg>
<div class="tx" style="left:1764px;top:1346px">GPU Video Engine Load</div>
<div class="tv" style="right:391px;top:1346px;color:#000">0.0 %</div>
<div class="tv" style="right:271px;top:1346px;color:#000">0.0 %</div>
<div class="tv" style="right:151px;top:1346px;color:#000">0.0 %</div>
<div class="tv" style="right:31px;top:1346px;color:#000">0.0 %</div>
<div class="rs" style="top:1371px;left:1762px"></div>
<div class="rb" style="top:1371px"></div>
<div class="sep" style="top:1395px"></div>
<svg class="ic" style="left:1738px;top:1372px" width="24" height="26" viewBox="0 0 24 26"><path d="M18.4 6.6A8 8 0 1 0 19.1 16.6" stroke="#2c3a3a" stroke-width="1.6" fill="none"/><path d="M20.5 4.4L20.8 9.0L16.4 8.3Z" fill="#2c3a3a"/><path d="M12.3 6.8V12.6L15.2 15.6" stroke="#2c3a3a" stroke-width="1.6" fill="none"/></svg>
<div class="tx" style="left:1764px;top:1371px">GPU Bus Load</div>
<div class="tv" style="right:391px;top:1371px;color:#000">100.0 %</div>
<div class="tv" style="right:271px;top:1371px;color:#000">85.0 %</div>
<div class="tv" style="right:151px;top:1371px;color:#000">100.0 %</div>
<div class="tv" style="right:31px;top:1371px;color:#000">95.9 %</div>
<div class="rb" style="top:1396px"></div>
<div class="sep" style="top:1420px"></div>
<svg class="ic" style="left:1738px;top:1397px" width="24" height="26" viewBox="0 0 24 26"><path d="M18.4 6.6A8 8 0 1 0 19.1 16.6" stroke="#2c3a3a" stroke-width="1.6" fill="none"/><path d="M20.5 4.4L20.8 9.0L16.4 8.3Z" fill="#2c3a3a"/><path d="M12.3 6.8V12.6L15.2 15.6" stroke="#2c3a3a" stroke-width="1.6" fill="none"/></svg>
<div class="tx" style="left:1764px;top:1396px">GPU Memory Usage</div>
<div class="tv" style="right:391px;top:1396px;color:#000">66.6 %</div>
<div class="tv" style="right:271px;top:1396px;color:#000">64.1 %</div>
<div class="tv" style="right:151px;top:1396px;color:#000">67.4 %</div>
<div class="tv" style="right:31px;top:1396px;color:#000">66.6 %</div>
<div class="rs" style="top:1421px;left:1786px"></div>
<div class="rb" style="top:1421px"></div>
<div class="sep" style="top:1445px"></div>
<svg class="ic" style="left:1762px;top:1422px" width="24" height="26" viewBox="0 0 24 26"><path d="M18.4 6.6A8 8 0 1 0 19.1 16.6" stroke="#2c3a3a" stroke-width="1.6" fill="none"/><path d="M20.5 4.4L20.8 9.0L16.4 8.3Z" fill="#2c3a3a"/><path d="M12.3 6.8V12.6L15.2 15.6" stroke="#2c3a3a" stroke-width="1.6" fill="none"/></svg>
<div class="tx" style="left:1788px;top:1421px">GPU D3D Usage</div>
<div class="tv" style="right:391px;top:1421px;color:#000">96.7 %</div>
<div class="tv" style="right:271px;top:1421px;color:#000">0.1 %</div>
<div class="tv" style="right:151px;top:1421px;color:#000">100.0 %</div>
<div class="tv" style="right:31px;top:1421px;color:#000">97.0 %</div>
<svg style="position:absolute;left:1716px;top:10px" width="24" height="24" viewBox="0 0 24 24"><defs><clipPath id="rc"><rect x="0" y="0" width="24" height="24" rx="3.5"/></clipPath></defs><g clip-path="url(#rc)"><rect x="0" y="0" width="24" height="12.5" fill="#2b8ad2"/><rect x="0" y="12.5" width="24" height="11.5" fill="#141a1c"/><rect x="5.5" y="2.2" width="3" height="10.3" fill="#fff"/><rect x="11" y="5.5" width="3" height="7" fill="#fff"/><circle cx="17.8" cy="10.6" r="1.8" fill="#fff"/><path d="M4.8 13.6h3.4v7.2q-3.4 0-3.4-3z M10.4 13.6h3.3v7.4h-3.3z M15.9 13.6h3.4v3.8q0 3.4-3.4 3.4z" fill="#fff"/></g></svg><div style="position:absolute;left:1749px;top:12px;font-size:17.5px;line-height:22px;color:#1a1a1a;white-space:nowrap">HWiNFO® 32 v8.30-5800 Sensor Status [278 values hidden]</div><div style="position:absolute;left:2367px;top:22px;width:15px;height:1px;background:#222"></div><div style="position:absolute;left:2436px;top:15px;width:15px;height:15px;border:1.3px solid #222;border-radius:2px"></div><svg style="position:absolute;left:2506px;top:14px" width="17" height="17" viewBox="0 0 17 17"><path d="M1 1L16 16M16 1L1 16" stroke="#222" stroke-width="1.3"/></svg><div class="hdr" style="left:1713px">Sensor</div><div class="hdr" style="right:391px">Current</div><div class="hdr" style="right:271px">Minimum</div><div class="hdr" style="right:151px">Maximum</div><div class="hdr" style="right:31px">Average</div><div class="cd" style="left:2030px"></div><div class="cd" style="left:2150px"></div><div class="cd" style="left:2270px"></div><div class="cd" style="left:2390px"></div><div class="cd" style="left:2510px"></div><div style="position:absolute;left:2522px;top:46px;width:14px;height:1390px;background:#f0f0f0"></div><div style="position:absolute;left:2531px;top:73px;width:8px;height:721px;background:#858585;border-radius:4px"></div><svg style="position:absolute;left:2527px;top:56px" width="9" height="8"><path d="M1 7L7 1L9 3V7Z" fill="#858585"/></svg><div style="position:absolute;left:1706px;top:1436px;width:830px;height:1px;background:#8a8a8a"></div><div style="position:absolute;left:1706px;top:1437px;width:830px;height:12px;background:#f0f0f0"></div><div style="position:absolute;left:2264px;top:1447px;width:60px;height:2px;background:#2f7fd0"></div>
<div class="ov">Gaming - Wukong - Performance, on desk</div>
</body></html>
